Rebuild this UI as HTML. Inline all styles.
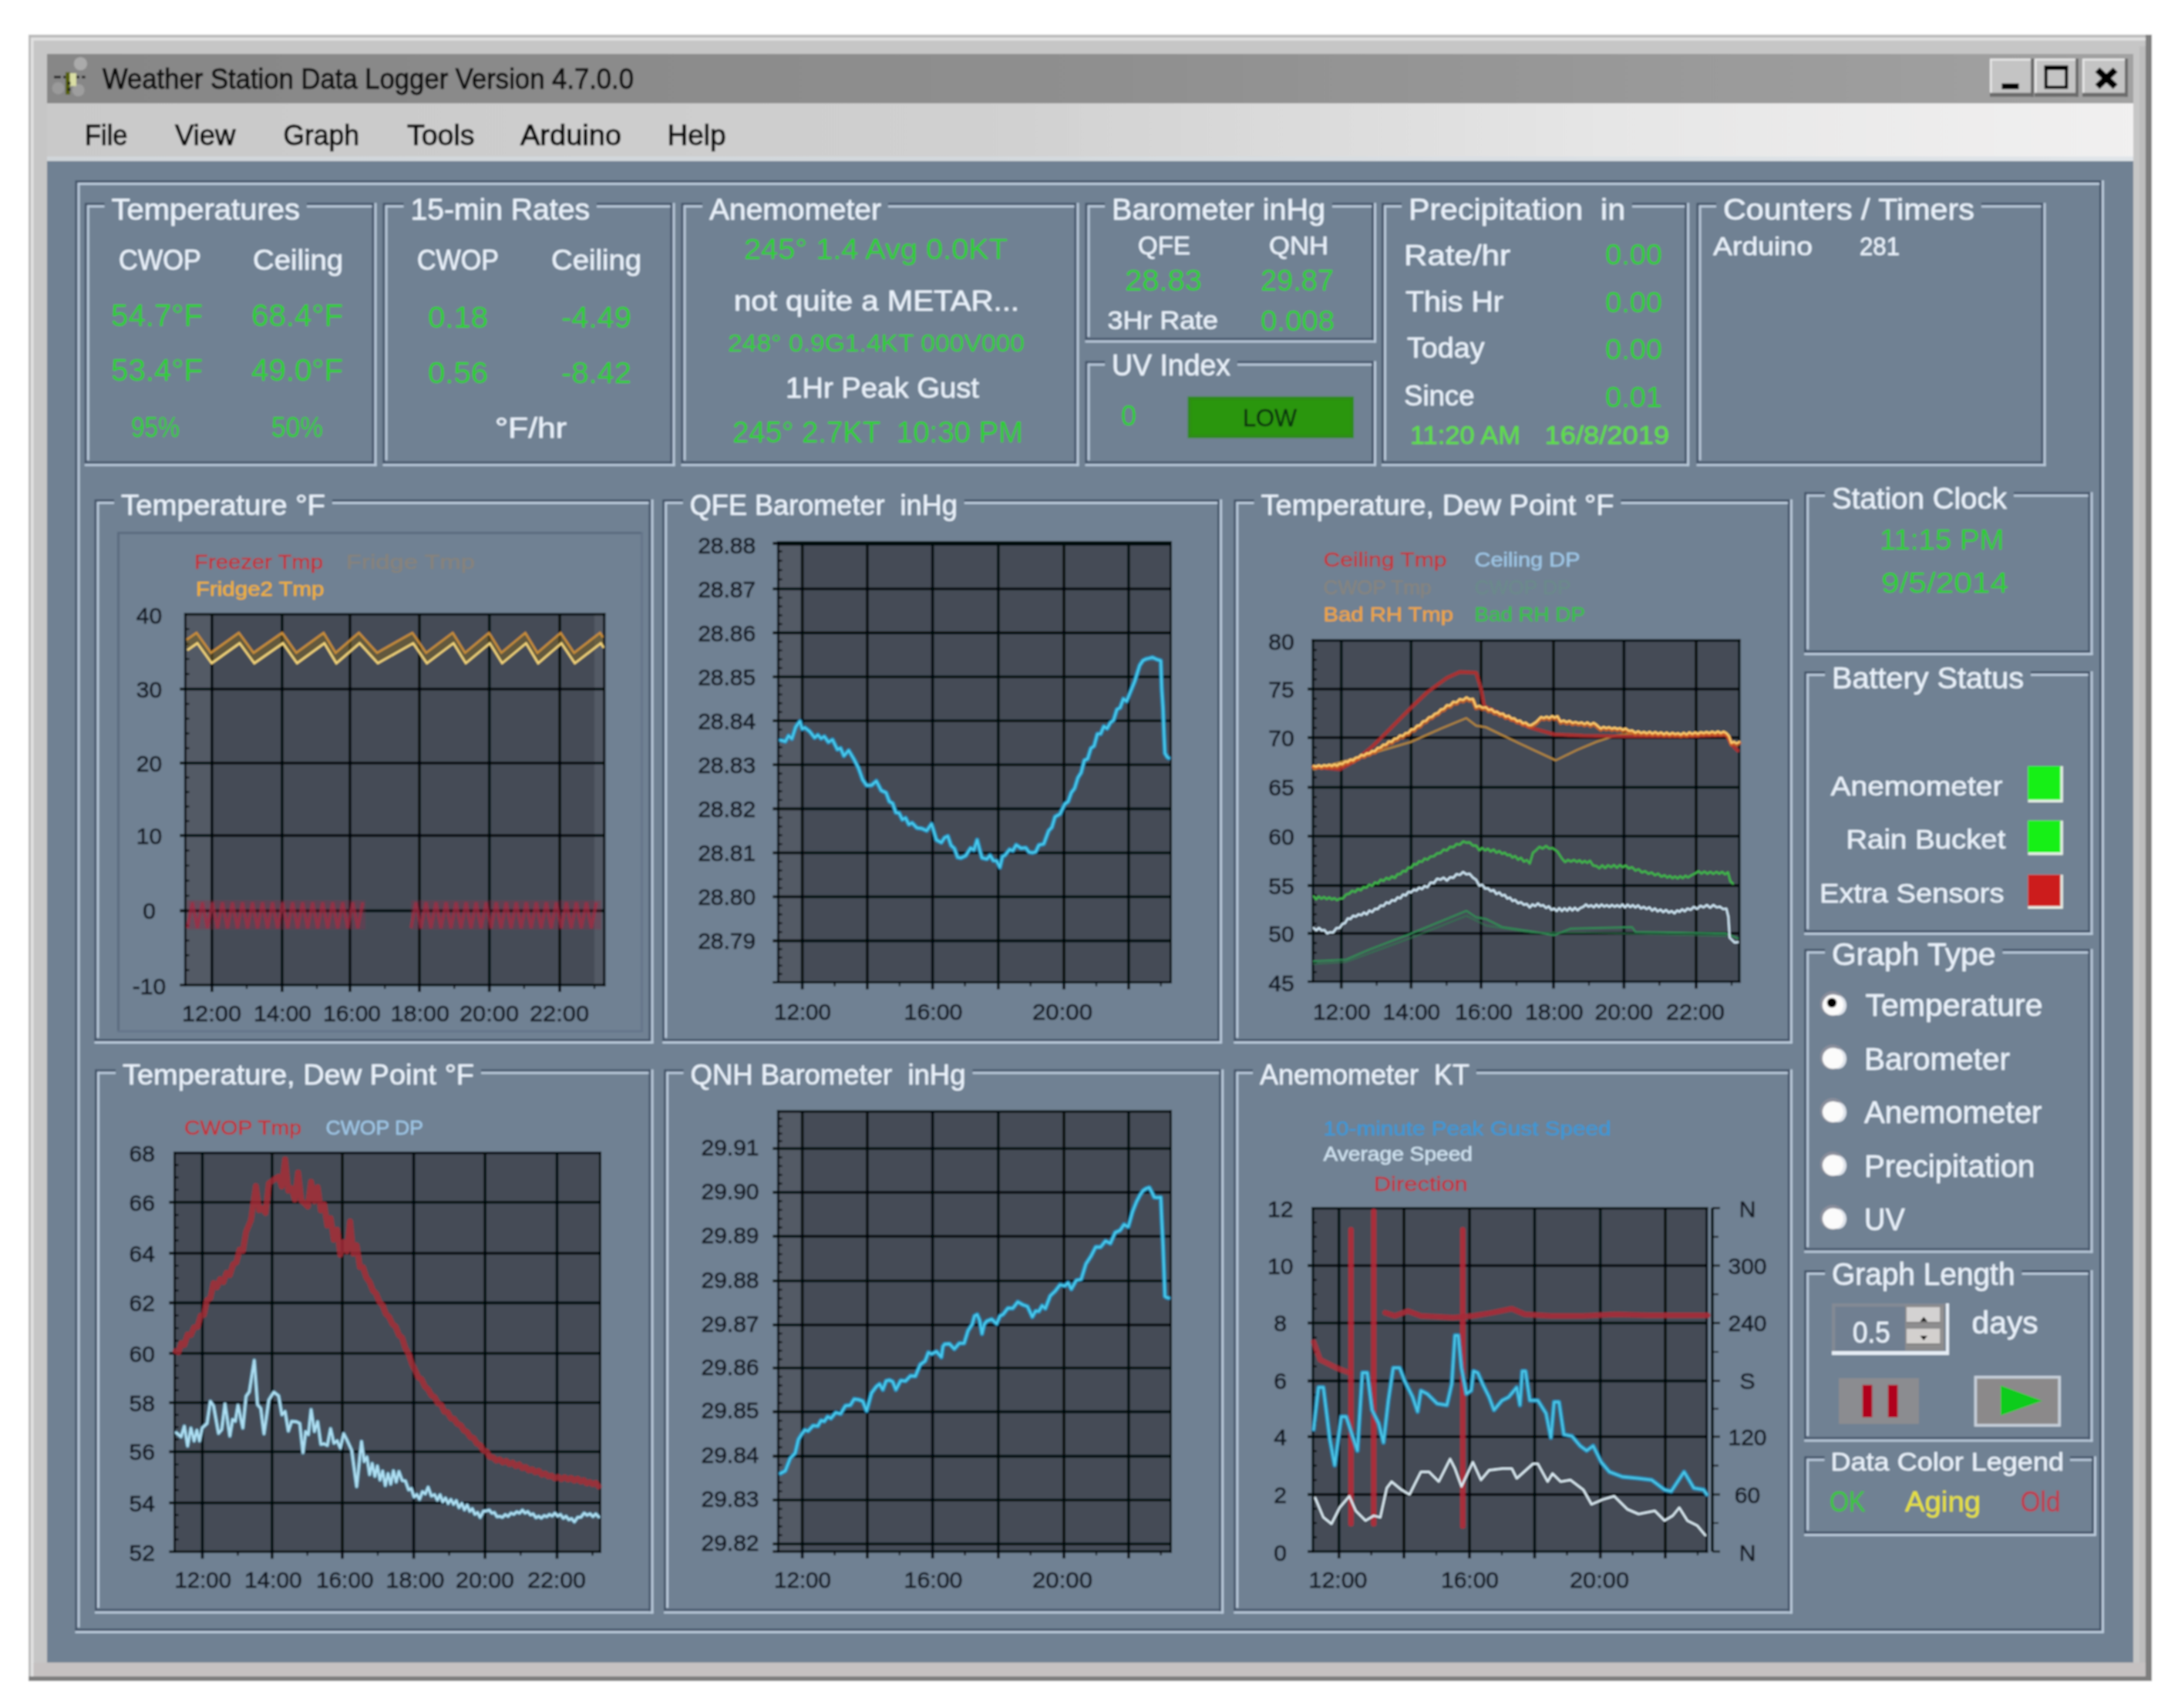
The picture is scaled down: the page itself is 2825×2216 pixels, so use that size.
<!DOCTYPE html>
<html><head><meta charset="utf-8"><title>Weather Station Data Logger Version 4.7.0.0</title>
<style>
html,body{margin:0;padding:0;background:#fff;overflow:hidden;}
svg{display:block;font-family:'Liberation Sans', sans-serif;}
text{white-space:pre;}
</style></head><body>
<svg width="2825" height="2216" viewBox="0 0 2825 2216">
<defs><filter id="soft" x="0" y="0" width="2825" height="2216" filterUnits="userSpaceOnUse"><feGaussianBlur stdDeviation="1.0"/></filter></defs>
<g filter="url(#soft)">
<rect width="2825" height="2216" fill="#ffffff"/>
<rect x="37.0" y="45.0" width="2754.0" height="2136.0" fill="#c6c6c6" />
<rect x="37.0" y="45.0" width="2754.0" height="3.0" fill="#b9b9b9" />
<rect x="37.0" y="45.0" width="3.0" height="2136.0" fill="#b9b9b9" />
<rect x="40.0" y="49.0" width="2744.0" height="3.5" fill="#e2e2e2" />
<rect x="40.0" y="49.0" width="3.5" height="2127.0" fill="#e2e2e2" />
<rect x="2783.0" y="45.0" width="8.0" height="2136.0" fill="#7e7e7e" />
<rect x="37.0" y="2175.0" width="2754.0" height="6.0" fill="#7e7e7e" />
<rect x="2775.0" y="60.0" width="8.0" height="2115.0" fill="#bdbdbd" />
<rect x="43.5" y="2157.0" width="2739.5" height="18.0" fill="#c5c1c1" />
<defs><linearGradient id="gt" x1="0" x2="1" y1="0" y2="0"><stop offset="0" stop-color="#878787"/><stop offset="0.5" stop-color="#8f8f8f"/><stop offset="1" stop-color="#a2a2a2"/></linearGradient><linearGradient id="gm" x1="0" x2="1" y1="0" y2="0"><stop offset="0" stop-color="#c9c9c9"/><stop offset="0.45" stop-color="#d0d0d0"/><stop offset="0.75" stop-color="#e6e6e6"/><stop offset="1" stop-color="#f1f0f0"/></linearGradient></defs>
<rect x="61.0" y="70.0" width="2706.0" height="64.0" fill="url(#gt)" />
<rect x="61.0" y="134.0" width="2706.0" height="75.0" fill="url(#gm)" />
<rect x="61.0" y="203.0" width="2706.0" height="6.0" fill="#d5dde4" opacity="0.6"/>
<rect x="61.0" y="209.0" width="2706.0" height="1948.0" fill="#708193" />
<circle cx="104.4" cy="82.7" r="8.6" fill="#b4b4b4" opacity="0.8"/>
<circle cx="75.5" cy="114.4" r="8" fill="#a2a2a2" opacity="0.7"/>
<circle cx="101.6" cy="117" r="8" fill="#a8a8a8" opacity="0.7"/>
<line x1="70" y1="100" x2="110.6" y2="100" stroke="#1c1c1c" stroke-width="3" stroke-dasharray="9 3"/>
<rect x="85.0" y="93.7" width="5.8" height="28.9" fill="#56600e" />
<rect x="90.6" y="95.0" width="8.3" height="16.6" fill="#dadea4" />
<rect x="87.9" y="106.0" width="3.4" height="4.0" fill="#0a0a0a" />
<rect x="87.9" y="114.4" width="3.4" height="3.4" fill="#0a0a0a" />
<text x="133.0" y="114.5" font-size="37" fill="#111111" textLength="689.0" lengthAdjust="spacingAndGlyphs" text-anchor="start" stroke="#111" stroke-width="1.1">Weather Station Data Logger Version 4.7.0.0</text>
<rect x="2581.0" y="76.0" width="56.0" height="48.0" fill="#c4c4c4" />
<rect x="2581.0" y="76.0" width="56.0" height="2.5" fill="#e8e8e8" />
<rect x="2581.0" y="76.0" width="2.5" height="48.0" fill="#e8e8e8" />
<rect x="2581.0" y="120.5" width="57.0" height="5.0" fill="#6a6a6a" />
<rect x="2634.0" y="76.0" width="4.0" height="49.5" fill="#6a6a6a" />
<rect x="2639.0" y="76.0" width="56.0" height="48.0" fill="#c4c4c4" />
<rect x="2639.0" y="76.0" width="56.0" height="2.5" fill="#e8e8e8" />
<rect x="2639.0" y="76.0" width="2.5" height="48.0" fill="#e8e8e8" />
<rect x="2639.0" y="120.5" width="57.0" height="5.0" fill="#6a6a6a" />
<rect x="2692.0" y="76.0" width="4.0" height="49.5" fill="#6a6a6a" />
<rect x="2701.0" y="76.0" width="58.0" height="48.0" fill="#c4c4c4" />
<rect x="2701.0" y="76.0" width="58.0" height="2.5" fill="#e8e8e8" />
<rect x="2701.0" y="76.0" width="2.5" height="48.0" fill="#e8e8e8" />
<rect x="2701.0" y="120.5" width="59.0" height="5.0" fill="#6a6a6a" />
<rect x="2756.0" y="76.0" width="4.0" height="49.5" fill="#6a6a6a" />
<rect x="2596.5" y="108.3" width="22.0" height="7.4" fill="#000" />
<rect x="2653.7" y="87" width="26.6" height="26.3" fill="none" stroke="#000" stroke-width="4"/>
<rect x="2651.7" y="84.8" width="30.6" height="6.2" fill="#000" />
<path d="M2720.5 90.5 L2743.7 112.5 M2743.7 90.5 L2720.5 112.5" stroke="#000" stroke-width="8.6" fill="none"/>
<text x="110.0" y="188.0" font-size="36" fill="#080808" textLength="55.5" lengthAdjust="spacingAndGlyphs" text-anchor="start" stroke="#080808" stroke-width="1.1">File</text>
<text x="227.0" y="188.0" font-size="36" fill="#080808" textLength="78.5" lengthAdjust="spacingAndGlyphs" text-anchor="start" stroke="#080808" stroke-width="1.1">View</text>
<text x="367.5" y="188.0" font-size="36" fill="#080808" textLength="98.5" lengthAdjust="spacingAndGlyphs" text-anchor="start" stroke="#080808" stroke-width="1.1">Graph</text>
<text x="528.0" y="188.0" font-size="36" fill="#080808" textLength="87.5" lengthAdjust="spacingAndGlyphs" text-anchor="start" stroke="#080808" stroke-width="1.1">Tools</text>
<text x="675.0" y="188.0" font-size="36" fill="#080808" textLength="131.0" lengthAdjust="spacingAndGlyphs" text-anchor="start" stroke="#080808" stroke-width="1.1">Arduino</text>
<text x="865.6" y="188.0" font-size="36" fill="#080808" textLength="76.0" lengthAdjust="spacingAndGlyphs" text-anchor="start" stroke="#080808" stroke-width="1.1">Help</text>
<line x1="99.0" y1="235.5" x2="2724.5" y2="235.5" stroke="#45556a" stroke-width="3.0" />
<line x1="102.0" y1="238.5" x2="2724.5" y2="238.5" stroke="#b9c9da" stroke-width="3.0" />
<line x1="99.0" y1="234.0" x2="99.0" y2="2114.5" stroke="#45556a" stroke-width="3.0" />
<line x1="102.0" y1="237.0" x2="102.0" y2="2111.5" stroke="#b9c9da" stroke-width="3.0" />
<line x1="97.5" y1="2114.5" x2="2724.5" y2="2114.5" stroke="#45556a" stroke-width="3.0" />
<line x1="97.5" y1="2117.5" x2="2729.0" y2="2117.5" stroke="#b9c9da" stroke-width="3.0" />
<line x1="2724.5" y1="234.0" x2="2724.5" y2="2116.0" stroke="#45556a" stroke-width="3.0" />
<line x1="2727.5" y1="234.0" x2="2727.5" y2="2119.0" stroke="#b9c9da" stroke-width="3.0" />
<line x1="111.3" y1="264.7" x2="135.5" y2="264.7" stroke="#45556a" stroke-width="3.0" />
<line x1="114.3" y1="267.7" x2="135.5" y2="267.7" stroke="#b9c9da" stroke-width="3.0" />
<line x1="398.0" y1="264.7" x2="484.0" y2="264.7" stroke="#45556a" stroke-width="3.0" />
<line x1="398.0" y1="267.7" x2="484.0" y2="267.7" stroke="#b9c9da" stroke-width="3.0" />
<line x1="111.3" y1="263.2" x2="111.3" y2="600.2" stroke="#45556a" stroke-width="3.0" />
<line x1="114.3" y1="266.2" x2="114.3" y2="597.2" stroke="#b9c9da" stroke-width="3.0" />
<line x1="109.8" y1="600.2" x2="484.0" y2="600.2" stroke="#45556a" stroke-width="3.0" />
<line x1="109.8" y1="603.2" x2="488.5" y2="603.2" stroke="#b9c9da" stroke-width="3.0" />
<line x1="484.0" y1="263.2" x2="484.0" y2="601.7" stroke="#45556a" stroke-width="3.0" />
<line x1="487.0" y1="263.2" x2="487.0" y2="604.7" stroke="#b9c9da" stroke-width="3.0" />
<text x="144.5" y="285.0" font-size="38" fill="#e9f1fa" stroke="#e9f1fa" stroke-width="0.45" textLength="244.5" lengthAdjust="spacingAndGlyphs" text-anchor="start" >Temperatures</text>
<line x1="498.0" y1="264.7" x2="523.5" y2="264.7" stroke="#45556a" stroke-width="3.0" />
<line x1="501.0" y1="267.7" x2="523.5" y2="267.7" stroke="#b9c9da" stroke-width="3.0" />
<line x1="774.0" y1="264.7" x2="871.0" y2="264.7" stroke="#45556a" stroke-width="3.0" />
<line x1="774.0" y1="267.7" x2="871.0" y2="267.7" stroke="#b9c9da" stroke-width="3.0" />
<line x1="498.0" y1="263.2" x2="498.0" y2="600.2" stroke="#45556a" stroke-width="3.0" />
<line x1="501.0" y1="266.2" x2="501.0" y2="597.2" stroke="#b9c9da" stroke-width="3.0" />
<line x1="496.5" y1="600.2" x2="871.0" y2="600.2" stroke="#45556a" stroke-width="3.0" />
<line x1="496.5" y1="603.2" x2="875.5" y2="603.2" stroke="#b9c9da" stroke-width="3.0" />
<line x1="871.0" y1="263.2" x2="871.0" y2="601.7" stroke="#45556a" stroke-width="3.0" />
<line x1="874.0" y1="263.2" x2="874.0" y2="604.7" stroke="#b9c9da" stroke-width="3.0" />
<text x="532.5" y="285.0" font-size="38" fill="#e9f1fa" stroke="#e9f1fa" stroke-width="0.45" textLength="232.5" lengthAdjust="spacingAndGlyphs" text-anchor="start" >15-min Rates</text>
<line x1="885.0" y1="264.7" x2="911.0" y2="264.7" stroke="#45556a" stroke-width="3.0" />
<line x1="888.0" y1="267.7" x2="911.0" y2="267.7" stroke="#b9c9da" stroke-width="3.0" />
<line x1="1152.0" y1="264.7" x2="1395.0" y2="264.7" stroke="#45556a" stroke-width="3.0" />
<line x1="1152.0" y1="267.7" x2="1395.0" y2="267.7" stroke="#b9c9da" stroke-width="3.0" />
<line x1="885.0" y1="263.2" x2="885.0" y2="600.2" stroke="#45556a" stroke-width="3.0" />
<line x1="888.0" y1="266.2" x2="888.0" y2="597.2" stroke="#b9c9da" stroke-width="3.0" />
<line x1="883.5" y1="600.2" x2="1395.0" y2="600.2" stroke="#45556a" stroke-width="3.0" />
<line x1="883.5" y1="603.2" x2="1399.5" y2="603.2" stroke="#b9c9da" stroke-width="3.0" />
<line x1="1395.0" y1="263.2" x2="1395.0" y2="601.7" stroke="#45556a" stroke-width="3.0" />
<line x1="1398.0" y1="263.2" x2="1398.0" y2="604.7" stroke="#b9c9da" stroke-width="3.0" />
<text x="920.0" y="285.0" font-size="38" fill="#e9f1fa" stroke="#e9f1fa" stroke-width="0.45" textLength="223.0" lengthAdjust="spacingAndGlyphs" text-anchor="start" >Anemometer</text>
<line x1="1409.0" y1="264.7" x2="1433.0" y2="264.7" stroke="#45556a" stroke-width="3.0" />
<line x1="1412.0" y1="267.7" x2="1433.0" y2="267.7" stroke="#b9c9da" stroke-width="3.0" />
<line x1="1728.0" y1="264.7" x2="1780.5" y2="264.7" stroke="#45556a" stroke-width="3.0" />
<line x1="1728.0" y1="267.7" x2="1780.5" y2="267.7" stroke="#b9c9da" stroke-width="3.0" />
<line x1="1409.0" y1="263.2" x2="1409.0" y2="440.0" stroke="#45556a" stroke-width="3.0" />
<line x1="1412.0" y1="266.2" x2="1412.0" y2="437.0" stroke="#b9c9da" stroke-width="3.0" />
<line x1="1407.5" y1="440.0" x2="1780.5" y2="440.0" stroke="#45556a" stroke-width="3.0" />
<line x1="1407.5" y1="443.0" x2="1785.0" y2="443.0" stroke="#b9c9da" stroke-width="3.0" />
<line x1="1780.5" y1="263.2" x2="1780.5" y2="441.5" stroke="#45556a" stroke-width="3.0" />
<line x1="1783.5" y1="263.2" x2="1783.5" y2="444.5" stroke="#b9c9da" stroke-width="3.0" />
<text x="1442.0" y="285.0" font-size="38" fill="#e9f1fa" stroke="#e9f1fa" stroke-width="0.45" textLength="277.0" lengthAdjust="spacingAndGlyphs" text-anchor="start" >Barometer inHg</text>
<line x1="1409.0" y1="470.0" x2="1433.0" y2="470.0" stroke="#45556a" stroke-width="3.0" />
<line x1="1412.0" y1="473.0" x2="1433.0" y2="473.0" stroke="#b9c9da" stroke-width="3.0" />
<line x1="1605.0" y1="470.0" x2="1780.5" y2="470.0" stroke="#45556a" stroke-width="3.0" />
<line x1="1605.0" y1="473.0" x2="1780.5" y2="473.0" stroke="#b9c9da" stroke-width="3.0" />
<line x1="1409.0" y1="468.5" x2="1409.0" y2="600.2" stroke="#45556a" stroke-width="3.0" />
<line x1="1412.0" y1="471.5" x2="1412.0" y2="597.2" stroke="#b9c9da" stroke-width="3.0" />
<line x1="1407.5" y1="600.2" x2="1780.5" y2="600.2" stroke="#45556a" stroke-width="3.0" />
<line x1="1407.5" y1="603.2" x2="1785.0" y2="603.2" stroke="#b9c9da" stroke-width="3.0" />
<line x1="1780.5" y1="468.5" x2="1780.5" y2="601.7" stroke="#45556a" stroke-width="3.0" />
<line x1="1783.5" y1="468.5" x2="1783.5" y2="604.7" stroke="#b9c9da" stroke-width="3.0" />
<text x="1442.0" y="487.0" font-size="38" fill="#e9f1fa" stroke="#e9f1fa" stroke-width="0.45" textLength="154.0" lengthAdjust="spacingAndGlyphs" text-anchor="start" >UV Index</text>
<line x1="1793.5" y1="264.7" x2="1818.0" y2="264.7" stroke="#45556a" stroke-width="3.0" />
<line x1="1796.5" y1="267.7" x2="1818.0" y2="267.7" stroke="#b9c9da" stroke-width="3.0" />
<line x1="2117.0" y1="264.7" x2="2186.6" y2="264.7" stroke="#45556a" stroke-width="3.0" />
<line x1="2117.0" y1="267.7" x2="2186.6" y2="267.7" stroke="#b9c9da" stroke-width="3.0" />
<line x1="1793.5" y1="263.2" x2="1793.5" y2="600.2" stroke="#45556a" stroke-width="3.0" />
<line x1="1796.5" y1="266.2" x2="1796.5" y2="597.2" stroke="#b9c9da" stroke-width="3.0" />
<line x1="1792.0" y1="600.2" x2="2186.6" y2="600.2" stroke="#45556a" stroke-width="3.0" />
<line x1="1792.0" y1="603.2" x2="2191.1" y2="603.2" stroke="#b9c9da" stroke-width="3.0" />
<line x1="2186.6" y1="263.2" x2="2186.6" y2="601.7" stroke="#45556a" stroke-width="3.0" />
<line x1="2189.6" y1="263.2" x2="2189.6" y2="604.7" stroke="#b9c9da" stroke-width="3.0" />
<text x="1827.0" y="285.0" font-size="38" fill="#e9f1fa" stroke="#e9f1fa" stroke-width="0.45" textLength="281.0" lengthAdjust="spacingAndGlyphs" text-anchor="start" >Precipitation  in</text>
<line x1="2202.0" y1="264.7" x2="2226.0" y2="264.7" stroke="#45556a" stroke-width="3.0" />
<line x1="2205.0" y1="267.7" x2="2226.0" y2="267.7" stroke="#b9c9da" stroke-width="3.0" />
<line x1="2570.0" y1="264.7" x2="2649.0" y2="264.7" stroke="#45556a" stroke-width="3.0" />
<line x1="2570.0" y1="267.7" x2="2649.0" y2="267.7" stroke="#b9c9da" stroke-width="3.0" />
<line x1="2202.0" y1="263.2" x2="2202.0" y2="600.2" stroke="#45556a" stroke-width="3.0" />
<line x1="2205.0" y1="266.2" x2="2205.0" y2="597.2" stroke="#b9c9da" stroke-width="3.0" />
<line x1="2200.5" y1="600.2" x2="2649.0" y2="600.2" stroke="#45556a" stroke-width="3.0" />
<line x1="2200.5" y1="603.2" x2="2653.5" y2="603.2" stroke="#b9c9da" stroke-width="3.0" />
<line x1="2649.0" y1="263.2" x2="2649.0" y2="601.7" stroke="#45556a" stroke-width="3.0" />
<line x1="2652.0" y1="263.2" x2="2652.0" y2="604.7" stroke="#b9c9da" stroke-width="3.0" />
<text x="2235.0" y="285.0" font-size="38" fill="#e9f1fa" stroke="#e9f1fa" stroke-width="0.45" textLength="326.0" lengthAdjust="spacingAndGlyphs" text-anchor="start" >Counters / Timers</text>
<text x="154.0" y="350.0" font-size="37" fill="#e9f1fa" stroke="#e9f1fa" stroke-width="0.45" textLength="107.0" lengthAdjust="spacingAndGlyphs" text-anchor="start" >CWOP</text>
<text x="328.0" y="350.0" font-size="37" fill="#e9f1fa" stroke="#e9f1fa" stroke-width="0.45" textLength="117.0" lengthAdjust="spacingAndGlyphs" text-anchor="start" >Ceiling</text>
<text x="144.0" y="422.5" font-size="40" fill="#2bd02f" textLength="119.0" lengthAdjust="spacingAndGlyphs" text-anchor="start" >54.7°F</text>
<text x="326.0" y="422.5" font-size="40" fill="#2bd02f" textLength="119.0" lengthAdjust="spacingAndGlyphs" text-anchor="start" >68.4°F</text>
<text x="144.0" y="494.0" font-size="40" fill="#2bd02f" textLength="119.0" lengthAdjust="spacingAndGlyphs" text-anchor="start" >53.4°F</text>
<text x="326.0" y="494.0" font-size="40" fill="#2bd02f" textLength="119.0" lengthAdjust="spacingAndGlyphs" text-anchor="start" >49.0°F</text>
<text x="170.0" y="566.5" font-size="36" fill="#2bd02f" textLength="63.0" lengthAdjust="spacingAndGlyphs" text-anchor="start" >95%</text>
<text x="352.0" y="566.5" font-size="36" fill="#2bd02f" textLength="67.0" lengthAdjust="spacingAndGlyphs" text-anchor="start" >50%</text>
<text x="541.0" y="350.0" font-size="37" fill="#e9f1fa" stroke="#e9f1fa" stroke-width="0.45" textLength="106.0" lengthAdjust="spacingAndGlyphs" text-anchor="start" >CWOP</text>
<text x="715.0" y="350.0" font-size="37" fill="#e9f1fa" stroke="#e9f1fa" stroke-width="0.45" textLength="117.0" lengthAdjust="spacingAndGlyphs" text-anchor="start" >Ceiling</text>
<text x="555.0" y="425.0" font-size="38" fill="#2bd02f" textLength="78.0" lengthAdjust="spacingAndGlyphs" text-anchor="start" >0.18</text>
<text x="728.0" y="425.0" font-size="38" fill="#2bd02f" textLength="91.0" lengthAdjust="spacingAndGlyphs" text-anchor="start" >-4.49</text>
<text x="555.0" y="497.0" font-size="38" fill="#2bd02f" textLength="78.0" lengthAdjust="spacingAndGlyphs" text-anchor="start" >0.56</text>
<text x="728.0" y="497.0" font-size="38" fill="#2bd02f" textLength="91.0" lengthAdjust="spacingAndGlyphs" text-anchor="start" >-8.42</text>
<text x="642.0" y="568.0" font-size="36" fill="#e9f1fa" stroke="#e9f1fa" stroke-width="0.45" textLength="93.0" lengthAdjust="spacingAndGlyphs" text-anchor="start" >°F/hr</text>
<text x="965.0" y="336.0" font-size="36" fill="#2bd02f" textLength="342.0" lengthAdjust="spacingAndGlyphs" text-anchor="start" >245° 1.4 Avg 0.0KT</text>
<text x="952.0" y="403.0" font-size="36" fill="#e9f1fa" stroke="#e9f1fa" stroke-width="0.45" textLength="370.0" lengthAdjust="spacingAndGlyphs" text-anchor="start" >not quite a METAR...</text>
<text x="944.0" y="456.0" font-size="32" fill="#2bd02f" textLength="385.0" lengthAdjust="spacingAndGlyphs" text-anchor="start" >248° 0.9G1.4KT 000V000</text>
<text x="1019.0" y="516.0" font-size="36" fill="#e9f1fa" stroke="#e9f1fa" stroke-width="0.45" textLength="251.0" lengthAdjust="spacingAndGlyphs" text-anchor="start" >1Hr Peak Gust</text>
<text x="950.0" y="574.0" font-size="38" fill="#2bd02f" textLength="377.0" lengthAdjust="spacingAndGlyphs" text-anchor="start" >245° 2.7KT  10:30 PM</text>
<text x="1476.0" y="330.0" font-size="34" fill="#e9f1fa" stroke="#e9f1fa" stroke-width="0.45" textLength="68.0" lengthAdjust="spacingAndGlyphs" text-anchor="start" >QFE</text>
<text x="1646.0" y="330.0" font-size="34" fill="#e9f1fa" stroke="#e9f1fa" stroke-width="0.45" textLength="77.0" lengthAdjust="spacingAndGlyphs" text-anchor="start" >QNH</text>
<text x="1459.0" y="377.0" font-size="38" fill="#2bd02f" textLength="100.0" lengthAdjust="spacingAndGlyphs" text-anchor="start" >28.83</text>
<text x="1635.0" y="377.0" font-size="38" fill="#2bd02f" textLength="95.0" lengthAdjust="spacingAndGlyphs" text-anchor="start" >29.87</text>
<text x="1436.5" y="427.0" font-size="34" fill="#e9f1fa" stroke="#e9f1fa" stroke-width="0.45" textLength="143.5" lengthAdjust="spacingAndGlyphs" text-anchor="start" >3Hr Rate</text>
<text x="1635.0" y="429.0" font-size="37" fill="#2bd02f" textLength="96.0" lengthAdjust="spacingAndGlyphs" text-anchor="start" >0.008</text>
<text x="1454.0" y="552.0" font-size="36" fill="#2bd02f" textLength="20.0" lengthAdjust="spacingAndGlyphs" text-anchor="start" >0</text>
<rect x="1540.6" y="514.5" width="215.4" height="53.9" fill="#2f8c16" />
<rect x="1545.0" y="519.0" width="207.0" height="45.0" fill="#2b960f" />
<text x="1612.0" y="553.0" font-size="31" fill="#0c3308" stroke="#0c3308" stroke-width="0.45" textLength="70.0" lengthAdjust="spacingAndGlyphs" text-anchor="start" >LOW</text>
<text x="1821.0" y="343.5" font-size="36" fill="#e9f1fa" stroke="#e9f1fa" stroke-width="0.45" textLength="138.0" lengthAdjust="spacingAndGlyphs" text-anchor="start" >Rate/hr</text>
<text x="1823.0" y="404.0" font-size="36" fill="#e9f1fa" stroke="#e9f1fa" stroke-width="0.45" textLength="127.0" lengthAdjust="spacingAndGlyphs" text-anchor="start" >This Hr</text>
<text x="1825.0" y="464.0" font-size="36" fill="#e9f1fa" stroke="#e9f1fa" stroke-width="0.45" textLength="100.5" lengthAdjust="spacingAndGlyphs" text-anchor="start" >Today</text>
<text x="1821.0" y="525.6" font-size="36" fill="#e9f1fa" stroke="#e9f1fa" stroke-width="0.45" textLength="91.5" lengthAdjust="spacingAndGlyphs" text-anchor="start" >Since</text>
<text x="2082.0" y="343.0" font-size="37" fill="#2bd02f" textLength="74.0" lengthAdjust="spacingAndGlyphs" text-anchor="start" >0.00</text>
<text x="2082.0" y="405.0" font-size="37" fill="#2bd02f" textLength="74.0" lengthAdjust="spacingAndGlyphs" text-anchor="start" >0.00</text>
<text x="2082.0" y="466.0" font-size="37" fill="#2bd02f" textLength="74.0" lengthAdjust="spacingAndGlyphs" text-anchor="start" >0.00</text>
<text x="2082.0" y="527.5" font-size="37" fill="#2bd02f" textLength="74.0" lengthAdjust="spacingAndGlyphs" text-anchor="start" >0.01</text>
<text x="1829.0" y="576.0" font-size="34" fill="#5fe046" stroke="#5fe046" stroke-width="0.45" textLength="143.0" lengthAdjust="spacingAndGlyphs" text-anchor="start" >11:20 AM</text>
<text x="2003.6" y="576.0" font-size="34" fill="#5fe046" stroke="#5fe046" stroke-width="0.45" textLength="161.5" lengthAdjust="spacingAndGlyphs" text-anchor="start" >16/8/2019</text>
<text x="2222.0" y="331.0" font-size="34" fill="#e9f1fa" stroke="#e9f1fa" stroke-width="0.45" textLength="129.0" lengthAdjust="spacingAndGlyphs" text-anchor="start" >Arduino</text>
<text x="2412.0" y="331.0" font-size="34" fill="#e9f1fa" stroke="#e9f1fa" stroke-width="0.45" textLength="52.0" lengthAdjust="spacingAndGlyphs" text-anchor="start" >281</text>
<line x1="2341.7" y1="640.0" x2="2367.0" y2="640.0" stroke="#45556a" stroke-width="3.0" />
<line x1="2344.7" y1="643.0" x2="2367.0" y2="643.0" stroke="#b9c9da" stroke-width="3.0" />
<line x1="2612.0" y1="640.0" x2="2710.0" y2="640.0" stroke="#45556a" stroke-width="3.0" />
<line x1="2612.0" y1="643.0" x2="2710.0" y2="643.0" stroke="#b9c9da" stroke-width="3.0" />
<line x1="2341.7" y1="638.5" x2="2341.7" y2="845.5" stroke="#45556a" stroke-width="3.0" />
<line x1="2344.7" y1="641.5" x2="2344.7" y2="842.5" stroke="#b9c9da" stroke-width="3.0" />
<line x1="2340.2" y1="845.5" x2="2710.0" y2="845.5" stroke="#45556a" stroke-width="3.0" />
<line x1="2340.2" y1="848.5" x2="2714.5" y2="848.5" stroke="#b9c9da" stroke-width="3.0" />
<line x1="2710.0" y1="638.5" x2="2710.0" y2="847.0" stroke="#45556a" stroke-width="3.0" />
<line x1="2713.0" y1="638.5" x2="2713.0" y2="850.0" stroke="#b9c9da" stroke-width="3.0" />
<text x="2376.0" y="659.5" font-size="38" fill="#e9f1fa" stroke="#e9f1fa" stroke-width="0.45" textLength="227.0" lengthAdjust="spacingAndGlyphs" text-anchor="start" >Station Clock</text>
<text x="2438.0" y="712.6" font-size="36" fill="#2bd02f" textLength="161.5" lengthAdjust="spacingAndGlyphs" text-anchor="start" >11:15 PM</text>
<text x="2440.0" y="769.0" font-size="37" fill="#2bd02f" textLength="165.0" lengthAdjust="spacingAndGlyphs" text-anchor="start" >9/5/2014</text>
<line x1="2341.7" y1="872.6" x2="2367.0" y2="872.6" stroke="#45556a" stroke-width="3.0" />
<line x1="2344.7" y1="875.6" x2="2367.0" y2="875.6" stroke="#b9c9da" stroke-width="3.0" />
<line x1="2634.0" y1="872.6" x2="2710.0" y2="872.6" stroke="#45556a" stroke-width="3.0" />
<line x1="2634.0" y1="875.6" x2="2710.0" y2="875.6" stroke="#b9c9da" stroke-width="3.0" />
<line x1="2341.7" y1="871.1" x2="2341.7" y2="1208.4" stroke="#45556a" stroke-width="3.0" />
<line x1="2344.7" y1="874.1" x2="2344.7" y2="1205.4" stroke="#b9c9da" stroke-width="3.0" />
<line x1="2340.2" y1="1208.4" x2="2710.0" y2="1208.4" stroke="#45556a" stroke-width="3.0" />
<line x1="2340.2" y1="1211.4" x2="2714.5" y2="1211.4" stroke="#b9c9da" stroke-width="3.0" />
<line x1="2710.0" y1="871.1" x2="2710.0" y2="1209.9" stroke="#45556a" stroke-width="3.0" />
<line x1="2713.0" y1="871.1" x2="2713.0" y2="1212.9" stroke="#b9c9da" stroke-width="3.0" />
<text x="2376.0" y="892.5" font-size="38" fill="#e9f1fa" stroke="#e9f1fa" stroke-width="0.45" textLength="249.0" lengthAdjust="spacingAndGlyphs" text-anchor="start" >Battery Status</text>
<text x="2374.5" y="1032.0" font-size="35" fill="#e9f1fa" stroke="#e9f1fa" stroke-width="0.45" textLength="223.0" lengthAdjust="spacingAndGlyphs" text-anchor="start" >Anemometer</text>
<text x="2394.4" y="1101.0" font-size="35" fill="#e9f1fa" stroke="#e9f1fa" stroke-width="0.45" textLength="207.0" lengthAdjust="spacingAndGlyphs" text-anchor="start" >Rain Bucket</text>
<text x="2360.0" y="1171.0" font-size="35" fill="#e9f1fa" stroke="#e9f1fa" stroke-width="0.45" textLength="239.5" lengthAdjust="spacingAndGlyphs" text-anchor="start" >Extra Sensors</text>
<rect x="2630.4" y="994.0" width="45.4" height="47.0" fill="#e6efe6" />
<rect x="2630.4" y="994.0" width="42.1" height="43.5" fill="#12f012" />
<rect x="2630.4" y="1064.7" width="45.4" height="44.7" fill="#e6efe6" />
<rect x="2630.4" y="1064.7" width="42.1" height="41.2" fill="#12f012" />
<rect x="2630.4" y="1134.8" width="45.4" height="44.2" fill="#e6efe6" />
<rect x="2630.4" y="1134.8" width="42.1" height="40.7" fill="#cc1a1a" />
<line x1="2341.7" y1="1232.7" x2="2367.0" y2="1232.7" stroke="#45556a" stroke-width="3.0" />
<line x1="2344.7" y1="1235.7" x2="2367.0" y2="1235.7" stroke="#b9c9da" stroke-width="3.0" />
<line x1="2597.5" y1="1232.7" x2="2710.0" y2="1232.7" stroke="#45556a" stroke-width="3.0" />
<line x1="2597.5" y1="1235.7" x2="2710.0" y2="1235.7" stroke="#b9c9da" stroke-width="3.0" />
<line x1="2341.7" y1="1231.2" x2="2341.7" y2="1621.0" stroke="#45556a" stroke-width="3.0" />
<line x1="2344.7" y1="1234.2" x2="2344.7" y2="1618.0" stroke="#b9c9da" stroke-width="3.0" />
<line x1="2340.2" y1="1621.0" x2="2710.0" y2="1621.0" stroke="#45556a" stroke-width="3.0" />
<line x1="2340.2" y1="1624.0" x2="2714.5" y2="1624.0" stroke="#b9c9da" stroke-width="3.0" />
<line x1="2710.0" y1="1231.2" x2="2710.0" y2="1622.5" stroke="#45556a" stroke-width="3.0" />
<line x1="2713.0" y1="1231.2" x2="2713.0" y2="1625.5" stroke="#b9c9da" stroke-width="3.0" />
<text x="2376.0" y="1251.5" font-size="40" fill="#e9f1fa" stroke="#e9f1fa" stroke-width="0.45" textLength="212.5" lengthAdjust="spacingAndGlyphs" text-anchor="start" >Graph Type</text>
<text x="2419.5" y="1318.0" font-size="40" fill="#e9f1fa" stroke="#e9f1fa" stroke-width="0.45" textLength="230.0" lengthAdjust="spacingAndGlyphs" text-anchor="start" >Temperature</text>
<circle cx="2377" cy="1302.3000000000002" r="16.3" fill="#8a8e9b"/>
<ellipse cx="2384" cy="1304.4" rx="11" ry="13" fill="#dde2ea"/>
<circle cx="2377.5" cy="1303.9" r="13.6" fill="#fbfbfb"/>
<text x="2418.0" y="1388.0" font-size="40" fill="#e9f1fa" stroke="#e9f1fa" stroke-width="0.45" textLength="189.0" lengthAdjust="spacingAndGlyphs" text-anchor="start" >Barometer</text>
<circle cx="2377" cy="1371.6000000000001" r="16.3" fill="#8a8e9b"/>
<ellipse cx="2384" cy="1373.7" rx="11" ry="13" fill="#dde2ea"/>
<circle cx="2377.5" cy="1373.2" r="13.6" fill="#fbfbfb"/>
<text x="2418.0" y="1457.0" font-size="40" fill="#e9f1fa" stroke="#e9f1fa" stroke-width="0.45" textLength="230.5" lengthAdjust="spacingAndGlyphs" text-anchor="start" >Anemometer</text>
<circle cx="2377" cy="1440.9" r="16.3" fill="#8a8e9b"/>
<ellipse cx="2384" cy="1443.0" rx="11" ry="13" fill="#dde2ea"/>
<circle cx="2377.5" cy="1442.5" r="13.6" fill="#fbfbfb"/>
<text x="2418.0" y="1527.0" font-size="40" fill="#e9f1fa" stroke="#e9f1fa" stroke-width="0.45" textLength="221.5" lengthAdjust="spacingAndGlyphs" text-anchor="start" >Precipitation</text>
<circle cx="2377" cy="1510.2" r="16.3" fill="#8a8e9b"/>
<ellipse cx="2384" cy="1512.3" rx="11" ry="13" fill="#dde2ea"/>
<circle cx="2377.5" cy="1511.8" r="13.6" fill="#fbfbfb"/>
<text x="2418.0" y="1595.5" font-size="40" fill="#e9f1fa" stroke="#e9f1fa" stroke-width="0.45" textLength="52.7" lengthAdjust="spacingAndGlyphs" text-anchor="start" >UV</text>
<circle cx="2377" cy="1579.5" r="16.3" fill="#8a8e9b"/>
<ellipse cx="2384" cy="1581.6" rx="11" ry="13" fill="#dde2ea"/>
<circle cx="2377.5" cy="1581.1" r="13.6" fill="#fbfbfb"/>
<circle cx="2376" cy="1301" r="6.2" fill="#000"/>
<line x1="2341.7" y1="1649.5" x2="2367.0" y2="1649.5" stroke="#45556a" stroke-width="3.0" />
<line x1="2344.7" y1="1652.5" x2="2367.0" y2="1652.5" stroke="#b9c9da" stroke-width="3.0" />
<line x1="2622.5" y1="1649.5" x2="2710.0" y2="1649.5" stroke="#45556a" stroke-width="3.0" />
<line x1="2622.5" y1="1652.5" x2="2710.0" y2="1652.5" stroke="#b9c9da" stroke-width="3.0" />
<line x1="2341.7" y1="1648.0" x2="2341.7" y2="1866.0" stroke="#45556a" stroke-width="3.0" />
<line x1="2344.7" y1="1651.0" x2="2344.7" y2="1863.0" stroke="#b9c9da" stroke-width="3.0" />
<line x1="2340.2" y1="1866.0" x2="2710.0" y2="1866.0" stroke="#45556a" stroke-width="3.0" />
<line x1="2340.2" y1="1869.0" x2="2714.5" y2="1869.0" stroke="#b9c9da" stroke-width="3.0" />
<line x1="2710.0" y1="1648.0" x2="2710.0" y2="1867.5" stroke="#45556a" stroke-width="3.0" />
<line x1="2713.0" y1="1648.0" x2="2713.0" y2="1870.5" stroke="#b9c9da" stroke-width="3.0" />
<text x="2376.0" y="1667.0" font-size="40" fill="#e9f1fa" stroke="#e9f1fa" stroke-width="0.45" textLength="237.5" lengthAdjust="spacingAndGlyphs" text-anchor="start" >Graph Length</text>
<rect x="2376.0" y="1691.0" width="152.0" height="67.0" fill="#e6edf5" />
<rect x="2376.0" y="1691.0" width="148.0" height="62.0" fill="#838a94" />
<rect x="2380.5" y="1695.4" width="143.5" height="57.6" fill="#6f7f91" />
<rect x="2471.0" y="1693.0" width="51.0" height="59.5" fill="#8c8c8e" />
<text x="2403.0" y="1741.5" font-size="39" fill="#e9f1fa" stroke="#e9f1fa" stroke-width="0.45" textLength="48.8" lengthAdjust="spacingAndGlyphs" text-anchor="start" >0.5</text>
<rect x="2473.0" y="1696.0" width="45.7" height="21.5" fill="#d3d2d2" />
<rect x="2473.0" y="1724.0" width="45.7" height="21.4" fill="#d3d0ce" />
<rect x="2473.0" y="1715.0" width="45.7" height="2.5" fill="#7a7a7a" />
<rect x="2473.0" y="1743.0" width="45.7" height="2.4" fill="#7a7a7a" />
<rect x="2516.2" y="1696.0" width="2.5" height="21.5" fill="#8a8a8a" />
<rect x="2516.2" y="1724.0" width="2.5" height="21.4" fill="#8a8a8a" />
<path d="M2490.5 1714.5 L2500 1714.5 L2495.2 1708.5 Z M2490.5 1733 L2500 1733 L2495.2 1739 Z" fill="#000"/>
<text x="2557.6" y="1730.0" font-size="40" fill="#e9f1fa" stroke="#e9f1fa" stroke-width="0.45" textLength="86.0" lengthAdjust="spacingAndGlyphs" text-anchor="start" >days</text>
<rect x="2385.0" y="1788.0" width="104.0" height="59.5" fill="#8b8c90" />
<rect x="2415.8" y="1796.8" width="12.5" height="41.9" fill="#b0021f" />
<rect x="2448.9" y="1796.8" width="12.5" height="41.9" fill="#b0021f" />
<rect x="2560.6" y="1785.0" width="112.4" height="66.0" fill="#c6cfda" />
<rect x="2564.2" y="1788.6" width="105.2" height="58.8" fill="#8b898a" />
<path d="M2595 1797.5 L2649 1817.4 L2595 1836.5 Z" fill="#08cc1c"/>
<line x1="2341.7" y1="1891.0" x2="2366.5" y2="1891.0" stroke="#45556a" stroke-width="3.0" />
<line x1="2344.7" y1="1894.0" x2="2366.5" y2="1894.0" stroke="#b9c9da" stroke-width="3.0" />
<line x1="2685.0" y1="1891.0" x2="2714.5" y2="1891.0" stroke="#45556a" stroke-width="3.0" />
<line x1="2685.0" y1="1894.0" x2="2714.5" y2="1894.0" stroke="#b9c9da" stroke-width="3.0" />
<line x1="2341.7" y1="1889.5" x2="2341.7" y2="1988.5" stroke="#45556a" stroke-width="3.0" />
<line x1="2344.7" y1="1892.5" x2="2344.7" y2="1985.5" stroke="#b9c9da" stroke-width="3.0" />
<line x1="2340.2" y1="1988.5" x2="2714.5" y2="1988.5" stroke="#45556a" stroke-width="3.0" />
<line x1="2340.2" y1="1991.5" x2="2719.0" y2="1991.5" stroke="#b9c9da" stroke-width="3.0" />
<line x1="2714.5" y1="1889.5" x2="2714.5" y2="1990.0" stroke="#45556a" stroke-width="3.0" />
<line x1="2717.5" y1="1889.5" x2="2717.5" y2="1993.0" stroke="#b9c9da" stroke-width="3.0" />
<text x="2374.5" y="1907.5" font-size="34" fill="#e9f1fa" stroke="#e9f1fa" stroke-width="0.45" textLength="302.5" lengthAdjust="spacingAndGlyphs" text-anchor="start" >Data Color Legend</text>
<text x="2373.0" y="1960.6" font-size="36" fill="#3cc43f" stroke="#3cc43f" stroke-width="0.45" textLength="46.6" lengthAdjust="spacingAndGlyphs" text-anchor="start" >OK</text>
<text x="2471.0" y="1960.6" font-size="36" fill="#e6e040" stroke="#e6e040" stroke-width="0.45" textLength="98.0" lengthAdjust="spacingAndGlyphs" text-anchor="start" >Aging</text>
<text x="2620.8" y="1960.6" font-size="36" fill="#c03c4e" stroke="#c03c4e" stroke-width="0.45" textLength="51.5" lengthAdjust="spacingAndGlyphs" text-anchor="start" >Old</text>
<line x1="124.0" y1="649.4" x2="148.0" y2="649.4" stroke="#45556a" stroke-width="3.0" />
<line x1="127.0" y1="652.4" x2="148.0" y2="652.4" stroke="#b9c9da" stroke-width="3.0" />
<line x1="431.0" y1="649.4" x2="843.0" y2="649.4" stroke="#45556a" stroke-width="3.0" />
<line x1="431.0" y1="652.4" x2="843.0" y2="652.4" stroke="#b9c9da" stroke-width="3.0" />
<line x1="124.0" y1="647.9" x2="124.0" y2="1349.6" stroke="#45556a" stroke-width="3.0" />
<line x1="127.0" y1="650.9" x2="127.0" y2="1346.6" stroke="#b9c9da" stroke-width="3.0" />
<line x1="122.5" y1="1349.6" x2="843.0" y2="1349.6" stroke="#45556a" stroke-width="3.0" />
<line x1="122.5" y1="1352.6" x2="847.5" y2="1352.6" stroke="#b9c9da" stroke-width="3.0" />
<line x1="843.0" y1="647.9" x2="843.0" y2="1351.1" stroke="#45556a" stroke-width="3.0" />
<line x1="846.0" y1="647.9" x2="846.0" y2="1354.1" stroke="#b9c9da" stroke-width="3.0" />
<text x="157.0" y="668.0" font-size="37" fill="#e9f1fa" stroke="#e9f1fa" stroke-width="0.45" textLength="265.0" lengthAdjust="spacingAndGlyphs" text-anchor="start" >Temperature °F</text>
<line x1="152.0" y1="691.5" x2="833.5" y2="691.5" stroke="#5c6c80" stroke-width="3" />
<line x1="153.5" y1="690.0" x2="153.5" y2="1339.0" stroke="#5c6c80" stroke-width="3" />
<line x1="152.0" y1="1338.0" x2="833.5" y2="1338.0" stroke="#64758a" stroke-width="2.5" />
<line x1="832.5" y1="690.0" x2="832.5" y2="1339.0" stroke="#64758a" stroke-width="2.5" />
<rect x="240.4" y="796.6" width="544.4" height="481.4" fill="#454c56" />
<rect x="240.4" y="796.6" width="34.4" height="481.4" fill="#8b95a3" opacity="0.2"/>
<rect x="771.0" y="796.6" width="13.8" height="481.4" fill="#8b95a3" opacity="0.2"/>
<line x1="274.8" y1="796.6" x2="274.8" y2="1287.0" stroke="#05070a" stroke-width="3.6" />
<line x1="365.8" y1="796.6" x2="365.8" y2="1287.0" stroke="#05070a" stroke-width="3.6" />
<line x1="453.9" y1="796.6" x2="453.9" y2="1287.0" stroke="#05070a" stroke-width="3.6" />
<line x1="544.0" y1="796.6" x2="544.0" y2="1287.0" stroke="#05070a" stroke-width="3.6" />
<line x1="634.7" y1="796.6" x2="634.7" y2="1287.0" stroke="#05070a" stroke-width="3.6" />
<line x1="726.0" y1="796.6" x2="726.0" y2="1287.0" stroke="#05070a" stroke-width="3.6" />
<line x1="233.4" y1="894.0" x2="784.8" y2="894.0" stroke="#05070a" stroke-width="3.6" />
<line x1="233.4" y1="990.0" x2="784.8" y2="990.0" stroke="#05070a" stroke-width="3.6" />
<line x1="233.4" y1="1084.0" x2="784.8" y2="1084.0" stroke="#05070a" stroke-width="3.6" />
<line x1="233.4" y1="1181.6" x2="784.8" y2="1181.6" stroke="#05070a" stroke-width="3.6" />
<rect x="238.9" y="795.4" width="546.4" height="3.1" fill="#05070a" />
<rect x="238.9" y="795.4" width="3.0" height="484.1" fill="#05070a" />
<rect x="782.3" y="795.4" width="3.0" height="484.1" fill="#05070a" />
<rect x="233.4" y="1276.5" width="551.9" height="3.0" fill="#05070a" />
<line x1="239.4" y1="816.1" x2="245.4" y2="816.1" stroke="#05070a" stroke-width="2.2" />
<line x1="239.4" y1="835.6" x2="245.4" y2="835.6" stroke="#05070a" stroke-width="2.2" />
<line x1="239.4" y1="855.0" x2="245.4" y2="855.0" stroke="#05070a" stroke-width="2.2" />
<line x1="239.4" y1="874.5" x2="245.4" y2="874.5" stroke="#05070a" stroke-width="2.2" />
<line x1="239.4" y1="913.2" x2="245.4" y2="913.2" stroke="#05070a" stroke-width="2.2" />
<line x1="239.4" y1="932.4" x2="245.4" y2="932.4" stroke="#05070a" stroke-width="2.2" />
<line x1="239.4" y1="951.6" x2="245.4" y2="951.6" stroke="#05070a" stroke-width="2.2" />
<line x1="239.4" y1="970.8" x2="245.4" y2="970.8" stroke="#05070a" stroke-width="2.2" />
<line x1="239.4" y1="1008.8" x2="245.4" y2="1008.8" stroke="#05070a" stroke-width="2.2" />
<line x1="239.4" y1="1027.6" x2="245.4" y2="1027.6" stroke="#05070a" stroke-width="2.2" />
<line x1="239.4" y1="1046.4" x2="245.4" y2="1046.4" stroke="#05070a" stroke-width="2.2" />
<line x1="239.4" y1="1065.2" x2="245.4" y2="1065.2" stroke="#05070a" stroke-width="2.2" />
<line x1="239.4" y1="1103.5" x2="245.4" y2="1103.5" stroke="#05070a" stroke-width="2.2" />
<line x1="239.4" y1="1123.0" x2="245.4" y2="1123.0" stroke="#05070a" stroke-width="2.2" />
<line x1="239.4" y1="1142.6" x2="245.4" y2="1142.6" stroke="#05070a" stroke-width="2.2" />
<line x1="239.4" y1="1162.1" x2="245.4" y2="1162.1" stroke="#05070a" stroke-width="2.2" />
<line x1="239.4" y1="1200.9" x2="245.4" y2="1200.9" stroke="#05070a" stroke-width="2.2" />
<line x1="239.4" y1="1220.2" x2="245.4" y2="1220.2" stroke="#05070a" stroke-width="2.2" />
<line x1="239.4" y1="1239.4" x2="245.4" y2="1239.4" stroke="#05070a" stroke-width="2.2" />
<line x1="239.4" y1="1258.7" x2="245.4" y2="1258.7" stroke="#05070a" stroke-width="2.2" />
<line x1="274.8" y1="1278.0" x2="274.8" y2="1283.0" stroke="#05070a" stroke-width="2.2" />
<line x1="320.0" y1="1278.0" x2="320.0" y2="1283.0" stroke="#05070a" stroke-width="2.2" />
<line x1="411.0" y1="1278.0" x2="411.0" y2="1283.0" stroke="#05070a" stroke-width="2.2" />
<line x1="499.1" y1="1278.0" x2="499.1" y2="1283.0" stroke="#05070a" stroke-width="2.2" />
<line x1="589.2" y1="1278.0" x2="589.2" y2="1283.0" stroke="#05070a" stroke-width="2.2" />
<line x1="679.9" y1="1278.0" x2="679.9" y2="1283.0" stroke="#05070a" stroke-width="2.2" />
<line x1="771.0" y1="1278.0" x2="771.0" y2="1283.0" stroke="#05070a" stroke-width="2.2" />
<text x="193.5" y="808.8" font-size="30" fill="#121923" stroke="#121923" stroke-width="0.7" text-anchor="middle" >40</text>
<text x="193.5" y="904.8" font-size="30" fill="#121923" stroke="#121923" stroke-width="0.7" text-anchor="middle" >30</text>
<text x="193.5" y="1000.8" font-size="30" fill="#121923" stroke="#121923" stroke-width="0.7" text-anchor="middle" >20</text>
<text x="193.5" y="1094.8" font-size="30" fill="#121923" stroke="#121923" stroke-width="0.7" text-anchor="middle" >10</text>
<text x="193.5" y="1192.4" font-size="30" fill="#121923" stroke="#121923" stroke-width="0.7" text-anchor="middle" >0</text>
<text x="193.5" y="1289.8" font-size="30" fill="#121923" stroke="#121923" stroke-width="0.7" text-anchor="middle" >-10</text>
<text x="236.0" y="1324.5" font-size="30" fill="#121923" stroke="#121923" stroke-width="0.7" textLength="77.0" lengthAdjust="spacingAndGlyphs" text-anchor="start" >12:00</text>
<text x="329.0" y="1324.5" font-size="30" fill="#121923" stroke="#121923" stroke-width="0.7" textLength="75.0" lengthAdjust="spacingAndGlyphs" text-anchor="start" >14:00</text>
<text x="419.0" y="1324.5" font-size="30" fill="#121923" stroke="#121923" stroke-width="0.7" textLength="75.0" lengthAdjust="spacingAndGlyphs" text-anchor="start" >16:00</text>
<text x="506.5" y="1324.5" font-size="30" fill="#121923" stroke="#121923" stroke-width="0.7" textLength="76.5" lengthAdjust="spacingAndGlyphs" text-anchor="start" >18:00</text>
<text x="596.0" y="1324.5" font-size="30" fill="#121923" stroke="#121923" stroke-width="0.7" textLength="77.0" lengthAdjust="spacingAndGlyphs" text-anchor="start" >20:00</text>
<text x="687.0" y="1324.5" font-size="30" fill="#121923" stroke="#121923" stroke-width="0.7" textLength="77.0" lengthAdjust="spacingAndGlyphs" text-anchor="start" >22:00</text>
<text x="252.0" y="738.0" font-size="26" fill="#c2333a" stroke="#c2333a" stroke-width="0.45" textLength="167.0" lengthAdjust="spacingAndGlyphs" text-anchor="start" >Freezer Tmp</text>
<text x="449.0" y="738.0" font-size="26" fill="#9a8468" stroke="#9a8468" stroke-width="0.45" textLength="167.0" lengthAdjust="spacingAndGlyphs" text-anchor="start" opacity="0.55">Fridge Tmp</text>
<text x="254.0" y="773.0" font-size="26" fill="#f2b035" stroke="#f2b035" stroke-width="0.45" textLength="166.5" lengthAdjust="spacingAndGlyphs" text-anchor="start" >Fridge2 Tmp</text>
<polygon points="242.0,830.1 254.9,821.0 273.6,847.0 309.8,821.0 328.9,847.0 366.0,821.0 384.3,847.0 419.7,821.0 435.3,847.0 465.5,821.0 489.1,847.0 534.9,821.0 552.7,847.0 587.2,821.0 603.2,847.0 634.3,821.0 650.3,847.0 681.4,821.0 697.0,847.0 727.2,821.0 744.6,847.0 778.3,821.0 782.0,827.0 783.0,840.5 779.3,834.5 745.6,860.5 728.2,834.5 698.0,860.5 682.4,834.5 651.3,860.5 635.3,834.5 604.2,860.5 588.2,834.5 553.7,860.5 535.9,834.5 490.1,860.5 466.5,834.5 436.3,860.5 420.7,834.5 385.3,860.5 367.0,834.5 329.9,860.5 310.8,834.5 274.6,860.5 255.9,834.5 243.0,843.6" fill="#7a6428" opacity="0.55"/>
<polyline points="242.0,830.1 254.9,821.0 273.6,847.0 309.8,821.0 328.9,847.0 366.0,821.0 384.3,847.0 419.7,821.0 435.3,847.0 465.5,821.0 489.1,847.0 534.9,821.0 552.7,847.0 587.2,821.0 603.2,847.0 634.3,821.0 650.3,847.0 681.4,821.0 697.0,847.0 727.2,821.0 744.6,847.0 778.3,821.0 782.0,827.0" fill="none" stroke="#cf9038" stroke-width="2.8" opacity="0.95"/>
<polyline points="243.0,843.6 255.9,834.5 274.6,860.5 310.8,834.5 329.9,860.5 367.0,834.5 385.3,860.5 420.7,834.5 436.3,860.5 466.5,834.5 490.1,860.5 535.9,834.5 553.7,860.5 588.2,834.5 604.2,860.5 635.3,834.5 651.3,860.5 682.4,834.5 698.0,860.5 728.2,834.5 745.6,860.5 779.3,834.5 783.0,840.5" fill="none" stroke="#f4d57a" stroke-width="2.8"/>
<rect x="243.0" y="1168.0" width="231.0" height="38.0" fill="#93304a" opacity="0.3"/>
<polyline points="243.0,1204.0 249.5,1171.0 256.0,1204.0 262.5,1171.0 269.0,1204.0 275.5,1171.0 282.0,1204.0 288.5,1171.0 295.0,1204.0 301.5,1171.0 308.0,1204.0 314.5,1171.0 321.0,1204.0 327.5,1171.0 334.0,1204.0 340.5,1171.0 347.0,1204.0 353.5,1171.0 360.0,1204.0 366.5,1171.0 373.0,1204.0 379.5,1171.0 386.0,1204.0 392.5,1171.0 399.0,1204.0 405.5,1171.0 412.0,1204.0 418.5,1171.0 425.0,1204.0 431.5,1171.0 438.0,1204.0 444.5,1171.0 451.0,1204.0 457.5,1171.0 464.0,1204.0 470.5,1171.0" fill="none" stroke="#a82a42" stroke-width="4" opacity="0.7"/>
<rect x="533.0" y="1168.0" width="247.0" height="38.0" fill="#93304a" opacity="0.3"/>
<polyline points="533.0,1204.0 539.5,1171.0 546.0,1204.0 552.5,1171.0 559.0,1204.0 565.5,1171.0 572.0,1204.0 578.5,1171.0 585.0,1204.0 591.5,1171.0 598.0,1204.0 604.5,1171.0 611.0,1204.0 617.5,1171.0 624.0,1204.0 630.5,1171.0 637.0,1204.0 643.5,1171.0 650.0,1204.0 656.5,1171.0 663.0,1204.0 669.5,1171.0 676.0,1204.0 682.5,1171.0 689.0,1204.0 695.5,1171.0 702.0,1204.0 708.5,1171.0 715.0,1204.0 721.5,1171.0 728.0,1204.0 734.5,1171.0 741.0,1204.0 747.5,1171.0 754.0,1204.0 760.5,1171.0 767.0,1204.0 773.5,1171.0" fill="none" stroke="#a82a42" stroke-width="4" opacity="0.7"/>
<line x1="860.7" y1="649.4" x2="885.8" y2="649.4" stroke="#45556a" stroke-width="3.0" />
<line x1="863.7" y1="652.4" x2="885.8" y2="652.4" stroke="#b9c9da" stroke-width="3.0" />
<line x1="1250.8" y1="649.4" x2="1580.6" y2="649.4" stroke="#45556a" stroke-width="3.0" />
<line x1="1250.8" y1="652.4" x2="1580.6" y2="652.4" stroke="#b9c9da" stroke-width="3.0" />
<line x1="860.7" y1="647.9" x2="860.7" y2="1349.6" stroke="#45556a" stroke-width="3.0" />
<line x1="863.7" y1="650.9" x2="863.7" y2="1346.6" stroke="#b9c9da" stroke-width="3.0" />
<line x1="859.2" y1="1349.6" x2="1580.6" y2="1349.6" stroke="#45556a" stroke-width="3.0" />
<line x1="859.2" y1="1352.6" x2="1585.1" y2="1352.6" stroke="#b9c9da" stroke-width="3.0" />
<line x1="1580.6" y1="647.9" x2="1580.6" y2="1351.1" stroke="#45556a" stroke-width="3.0" />
<line x1="1583.6" y1="647.9" x2="1583.6" y2="1354.1" stroke="#b9c9da" stroke-width="3.0" />
<text x="894.8" y="668.0" font-size="37" fill="#e9f1fa" stroke="#e9f1fa" stroke-width="0.45" textLength="347.0" lengthAdjust="spacingAndGlyphs" text-anchor="start" >QFE Barometer  inHg</text>
<rect x="1009.4" y="703.2" width="510.1" height="571.3" fill="#454c56" />
<rect x="1009.4" y="703.2" width="31.2" height="571.3" fill="#8b95a3" opacity="0.2"/>
<line x1="1040.6" y1="703.2" x2="1040.6" y2="1283.5" stroke="#05070a" stroke-width="3.6" />
<line x1="1124.9" y1="703.2" x2="1124.9" y2="1283.5" stroke="#05070a" stroke-width="3.6" />
<line x1="1209.6" y1="703.2" x2="1209.6" y2="1283.5" stroke="#05070a" stroke-width="3.6" />
<line x1="1294.8" y1="703.2" x2="1294.8" y2="1283.5" stroke="#05070a" stroke-width="3.6" />
<line x1="1380.0" y1="703.2" x2="1380.0" y2="1283.5" stroke="#05070a" stroke-width="3.6" />
<line x1="1463.8" y1="703.2" x2="1463.8" y2="1283.5" stroke="#05070a" stroke-width="3.6" />
<line x1="1002.4" y1="764.0" x2="1519.5" y2="764.0" stroke="#05070a" stroke-width="3.6" />
<line x1="1002.4" y1="821.1" x2="1519.5" y2="821.1" stroke="#05070a" stroke-width="3.6" />
<line x1="1002.4" y1="878.2" x2="1519.5" y2="878.2" stroke="#05070a" stroke-width="3.6" />
<line x1="1002.4" y1="935.2" x2="1519.5" y2="935.2" stroke="#05070a" stroke-width="3.6" />
<line x1="1002.4" y1="992.3" x2="1519.5" y2="992.3" stroke="#05070a" stroke-width="3.6" />
<line x1="1002.4" y1="1049.4" x2="1519.5" y2="1049.4" stroke="#05070a" stroke-width="3.6" />
<line x1="1002.4" y1="1106.5" x2="1519.5" y2="1106.5" stroke="#05070a" stroke-width="3.6" />
<line x1="1002.4" y1="1163.5" x2="1519.5" y2="1163.5" stroke="#05070a" stroke-width="3.6" />
<line x1="1002.4" y1="1220.6" x2="1519.5" y2="1220.6" stroke="#05070a" stroke-width="3.6" />
<rect x="1007.9" y="702.0" width="512.1" height="6.0" fill="#05070a" />
<rect x="1007.9" y="702.0" width="3.0" height="574.0" fill="#05070a" />
<rect x="1517.0" y="702.0" width="3.0" height="574.0" fill="#05070a" />
<rect x="1002.4" y="1273.0" width="517.6" height="3.0" fill="#05070a" />
<line x1="1002.4" y1="705.0" x2="1009.4" y2="705.0" stroke="#05070a" stroke-width="3.6" />
<line x1="1008.4" y1="715.4" x2="1014.4" y2="715.4" stroke="#05070a" stroke-width="2.2" />
<line x1="1008.4" y1="727.5" x2="1014.4" y2="727.5" stroke="#05070a" stroke-width="2.2" />
<line x1="1008.4" y1="739.7" x2="1014.4" y2="739.7" stroke="#05070a" stroke-width="2.2" />
<line x1="1008.4" y1="751.8" x2="1014.4" y2="751.8" stroke="#05070a" stroke-width="2.2" />
<line x1="1008.4" y1="775.4" x2="1014.4" y2="775.4" stroke="#05070a" stroke-width="2.2" />
<line x1="1008.4" y1="786.8" x2="1014.4" y2="786.8" stroke="#05070a" stroke-width="2.2" />
<line x1="1008.4" y1="798.3" x2="1014.4" y2="798.3" stroke="#05070a" stroke-width="2.2" />
<line x1="1008.4" y1="809.7" x2="1014.4" y2="809.7" stroke="#05070a" stroke-width="2.2" />
<line x1="1008.4" y1="832.5" x2="1014.4" y2="832.5" stroke="#05070a" stroke-width="2.2" />
<line x1="1008.4" y1="843.9" x2="1014.4" y2="843.9" stroke="#05070a" stroke-width="2.2" />
<line x1="1008.4" y1="855.4" x2="1014.4" y2="855.4" stroke="#05070a" stroke-width="2.2" />
<line x1="1008.4" y1="866.8" x2="1014.4" y2="866.8" stroke="#05070a" stroke-width="2.2" />
<line x1="1008.4" y1="889.6" x2="1014.4" y2="889.6" stroke="#05070a" stroke-width="2.2" />
<line x1="1008.4" y1="901.0" x2="1014.4" y2="901.0" stroke="#05070a" stroke-width="2.2" />
<line x1="1008.4" y1="912.4" x2="1014.4" y2="912.4" stroke="#05070a" stroke-width="2.2" />
<line x1="1008.4" y1="923.8" x2="1014.4" y2="923.8" stroke="#05070a" stroke-width="2.2" />
<line x1="1008.4" y1="946.6" x2="1014.4" y2="946.6" stroke="#05070a" stroke-width="2.2" />
<line x1="1008.4" y1="958.0" x2="1014.4" y2="958.0" stroke="#05070a" stroke-width="2.2" />
<line x1="1008.4" y1="969.5" x2="1014.4" y2="969.5" stroke="#05070a" stroke-width="2.2" />
<line x1="1008.4" y1="980.9" x2="1014.4" y2="980.9" stroke="#05070a" stroke-width="2.2" />
<line x1="1008.4" y1="1003.7" x2="1014.4" y2="1003.7" stroke="#05070a" stroke-width="2.2" />
<line x1="1008.4" y1="1015.1" x2="1014.4" y2="1015.1" stroke="#05070a" stroke-width="2.2" />
<line x1="1008.4" y1="1026.6" x2="1014.4" y2="1026.6" stroke="#05070a" stroke-width="2.2" />
<line x1="1008.4" y1="1038.0" x2="1014.4" y2="1038.0" stroke="#05070a" stroke-width="2.2" />
<line x1="1008.4" y1="1060.8" x2="1014.4" y2="1060.8" stroke="#05070a" stroke-width="2.2" />
<line x1="1008.4" y1="1072.2" x2="1014.4" y2="1072.2" stroke="#05070a" stroke-width="2.2" />
<line x1="1008.4" y1="1083.7" x2="1014.4" y2="1083.7" stroke="#05070a" stroke-width="2.2" />
<line x1="1008.4" y1="1095.1" x2="1014.4" y2="1095.1" stroke="#05070a" stroke-width="2.2" />
<line x1="1008.4" y1="1117.9" x2="1014.4" y2="1117.9" stroke="#05070a" stroke-width="2.2" />
<line x1="1008.4" y1="1129.3" x2="1014.4" y2="1129.3" stroke="#05070a" stroke-width="2.2" />
<line x1="1008.4" y1="1140.7" x2="1014.4" y2="1140.7" stroke="#05070a" stroke-width="2.2" />
<line x1="1008.4" y1="1152.1" x2="1014.4" y2="1152.1" stroke="#05070a" stroke-width="2.2" />
<line x1="1008.4" y1="1174.9" x2="1014.4" y2="1174.9" stroke="#05070a" stroke-width="2.2" />
<line x1="1008.4" y1="1186.3" x2="1014.4" y2="1186.3" stroke="#05070a" stroke-width="2.2" />
<line x1="1008.4" y1="1197.8" x2="1014.4" y2="1197.8" stroke="#05070a" stroke-width="2.2" />
<line x1="1008.4" y1="1209.2" x2="1014.4" y2="1209.2" stroke="#05070a" stroke-width="2.2" />
<line x1="1008.4" y1="1231.4" x2="1014.4" y2="1231.4" stroke="#05070a" stroke-width="2.2" />
<line x1="1008.4" y1="1242.2" x2="1014.4" y2="1242.2" stroke="#05070a" stroke-width="2.2" />
<line x1="1008.4" y1="1252.9" x2="1014.4" y2="1252.9" stroke="#05070a" stroke-width="2.2" />
<line x1="1008.4" y1="1263.7" x2="1014.4" y2="1263.7" stroke="#05070a" stroke-width="2.2" />
<line x1="1082.6" y1="1274.5" x2="1082.6" y2="1279.5" stroke="#05070a" stroke-width="2.2" />
<line x1="1166.9" y1="1274.5" x2="1166.9" y2="1279.5" stroke="#05070a" stroke-width="2.2" />
<line x1="1251.6" y1="1274.5" x2="1251.6" y2="1279.5" stroke="#05070a" stroke-width="2.2" />
<line x1="1336.8" y1="1274.5" x2="1336.8" y2="1279.5" stroke="#05070a" stroke-width="2.2" />
<line x1="1422.0" y1="1274.5" x2="1422.0" y2="1279.5" stroke="#05070a" stroke-width="2.2" />
<line x1="1505.8" y1="1274.5" x2="1505.8" y2="1279.5" stroke="#05070a" stroke-width="2.2" />
<text x="942.7" y="717.8" font-size="30" fill="#121923" stroke="#121923" stroke-width="0.7" text-anchor="middle" >28.88</text>
<text x="942.7" y="774.8" font-size="30" fill="#121923" stroke="#121923" stroke-width="0.7" text-anchor="middle" >28.87</text>
<text x="942.7" y="831.9" font-size="30" fill="#121923" stroke="#121923" stroke-width="0.7" text-anchor="middle" >28.86</text>
<text x="942.7" y="889.0" font-size="30" fill="#121923" stroke="#121923" stroke-width="0.7" text-anchor="middle" >28.85</text>
<text x="942.7" y="946.0" font-size="30" fill="#121923" stroke="#121923" stroke-width="0.7" text-anchor="middle" >28.84</text>
<text x="942.7" y="1003.1" font-size="30" fill="#121923" stroke="#121923" stroke-width="0.7" text-anchor="middle" >28.83</text>
<text x="942.7" y="1060.2" font-size="30" fill="#121923" stroke="#121923" stroke-width="0.7" text-anchor="middle" >28.82</text>
<text x="942.7" y="1117.3" font-size="30" fill="#121923" stroke="#121923" stroke-width="0.7" text-anchor="middle" >28.81</text>
<text x="942.7" y="1174.3" font-size="30" fill="#121923" stroke="#121923" stroke-width="0.7" text-anchor="middle" >28.80</text>
<text x="942.7" y="1231.4" font-size="30" fill="#121923" stroke="#121923" stroke-width="0.7" text-anchor="middle" >28.79</text>
<text x="1004.0" y="1323.0" font-size="30" fill="#121923" stroke="#121923" stroke-width="0.7" textLength="74.0" lengthAdjust="spacingAndGlyphs" text-anchor="start" >12:00</text>
<text x="1172.5" y="1323.0" font-size="30" fill="#121923" stroke="#121923" stroke-width="0.7" textLength="76.0" lengthAdjust="spacingAndGlyphs" text-anchor="start" >16:00</text>
<text x="1339.0" y="1323.0" font-size="30" fill="#121923" stroke="#121923" stroke-width="0.7" textLength="78.0" lengthAdjust="spacingAndGlyphs" text-anchor="start" >20:00</text>
<polyline points="1012.3,960.1 1018.6,962.2 1022.8,954.5 1027.1,958.6 1032.1,943.1 1037.6,935.7 1040.6,945.9 1043.9,944.0 1050.3,949.2 1056.6,957.2 1060.8,953.4 1065.0,958.2 1069.2,955.4 1074.5,962.9 1079.8,959.6 1086.1,972.5 1090.3,970.6 1094.5,980.7 1100.8,973.6 1107.2,984.2 1113.5,996.5 1118.8,1011.4 1124.0,1019.0 1130.4,1018.9 1136.7,1013.3 1143.0,1025.6 1149.3,1028.4 1153.5,1039.8 1157.8,1042.3 1162.0,1054.3 1166.2,1054.8 1170.4,1063.3 1174.6,1061.2 1178.8,1069.7 1183.1,1067.6 1189.4,1074.2 1195.7,1074.9 1202.0,1077.8 1208.3,1068.9 1214.7,1089.8 1221.0,1093.2 1225.2,1086.7 1229.4,1084.8 1233.6,1096.9 1237.9,1100.7 1242.1,1112.4 1246.3,1113.2 1252.6,1110.2 1258.9,1100.3 1263.2,1102.8 1267.4,1089.6 1271.6,1105.7 1273.7,1113.0 1280.0,1114.6 1284.2,1109.7 1288.4,1116.6 1292.7,1116.9 1296.9,1125.5 1300.3,1111.2 1303.2,1110.0 1309.5,1102.1 1313.7,1103.8 1318.0,1096.1 1324.3,1100.5 1330.6,1099.9 1334.8,1105.7 1339.0,1106.3 1343.3,1105.3 1347.5,1096.4 1353.8,1095.0 1360.1,1077.9 1364.3,1073.5 1368.5,1059.7 1374.9,1056.1 1381.2,1043.0 1385.4,1040.1 1389.6,1028.3 1393.8,1022.8 1398.1,1009.1 1402.3,1002.5 1406.5,986.4 1410.7,984.6 1414.9,970.9 1419.1,967.9 1423.4,952.2 1427.6,952.2 1431.8,942.4 1436.0,945.3 1440.2,937.6 1444.4,934.4 1448.7,920.5 1452.9,918.1 1457.1,906.7 1461.3,909.9 1465.5,899.3 1471.8,884.0 1478.2,863.4 1482.4,857.1 1486.6,855.0 1490.8,854.0 1495.0,852.9 1501.3,855.9 1505.6,857.1 1506.8,893.0 1508.5,918.2 1509.8,952.0 1511.0,977.3 1514.0,982.3 1516.1,983.6" fill="none" stroke="#1f8fc4" stroke-width="6" stroke-linejoin="round" stroke-linecap="round" opacity="0.75" />
<polyline points="1012.3,960.1 1018.6,962.2 1022.8,954.5 1027.1,958.6 1032.1,943.1 1037.6,935.7 1040.6,945.9 1043.9,944.0 1050.3,949.2 1056.6,957.2 1060.8,953.4 1065.0,958.2 1069.2,955.4 1074.5,962.9 1079.8,959.6 1086.1,972.5 1090.3,970.6 1094.5,980.7 1100.8,973.6 1107.2,984.2 1113.5,996.5 1118.8,1011.4 1124.0,1019.0 1130.4,1018.9 1136.7,1013.3 1143.0,1025.6 1149.3,1028.4 1153.5,1039.8 1157.8,1042.3 1162.0,1054.3 1166.2,1054.8 1170.4,1063.3 1174.6,1061.2 1178.8,1069.7 1183.1,1067.6 1189.4,1074.2 1195.7,1074.9 1202.0,1077.8 1208.3,1068.9 1214.7,1089.8 1221.0,1093.2 1225.2,1086.7 1229.4,1084.8 1233.6,1096.9 1237.9,1100.7 1242.1,1112.4 1246.3,1113.2 1252.6,1110.2 1258.9,1100.3 1263.2,1102.8 1267.4,1089.6 1271.6,1105.7 1273.7,1113.0 1280.0,1114.6 1284.2,1109.7 1288.4,1116.6 1292.7,1116.9 1296.9,1125.5 1300.3,1111.2 1303.2,1110.0 1309.5,1102.1 1313.7,1103.8 1318.0,1096.1 1324.3,1100.5 1330.6,1099.9 1334.8,1105.7 1339.0,1106.3 1343.3,1105.3 1347.5,1096.4 1353.8,1095.0 1360.1,1077.9 1364.3,1073.5 1368.5,1059.7 1374.9,1056.1 1381.2,1043.0 1385.4,1040.1 1389.6,1028.3 1393.8,1022.8 1398.1,1009.1 1402.3,1002.5 1406.5,986.4 1410.7,984.6 1414.9,970.9 1419.1,967.9 1423.4,952.2 1427.6,952.2 1431.8,942.4 1436.0,945.3 1440.2,937.6 1444.4,934.4 1448.7,920.5 1452.9,918.1 1457.1,906.7 1461.3,909.9 1465.5,899.3 1471.8,884.0 1478.2,863.4 1482.4,857.1 1486.6,855.0 1490.8,854.0 1495.0,852.9 1501.3,855.9 1505.6,857.1 1506.8,893.0 1508.5,918.2 1509.8,952.0 1511.0,977.3 1514.0,982.3 1516.1,983.6" fill="none" stroke="#4accf0" stroke-width="2.8" stroke-linejoin="round" stroke-linecap="round" opacity="1" />
<line x1="1601.8" y1="649.5" x2="1626.5" y2="649.5" stroke="#45556a" stroke-width="3.0" />
<line x1="1604.8" y1="652.5" x2="1626.5" y2="652.5" stroke="#b9c9da" stroke-width="3.0" />
<line x1="2102.5" y1="649.5" x2="2320.4" y2="649.5" stroke="#45556a" stroke-width="3.0" />
<line x1="2102.5" y1="652.5" x2="2320.4" y2="652.5" stroke="#b9c9da" stroke-width="3.0" />
<line x1="1601.8" y1="648.0" x2="1601.8" y2="1349.6" stroke="#45556a" stroke-width="3.0" />
<line x1="1604.8" y1="651.0" x2="1604.8" y2="1346.6" stroke="#b9c9da" stroke-width="3.0" />
<line x1="1600.3" y1="1349.6" x2="2320.4" y2="1349.6" stroke="#45556a" stroke-width="3.0" />
<line x1="1600.3" y1="1352.6" x2="2324.9" y2="1352.6" stroke="#b9c9da" stroke-width="3.0" />
<line x1="2320.4" y1="648.0" x2="2320.4" y2="1351.1" stroke="#45556a" stroke-width="3.0" />
<line x1="2323.4" y1="648.0" x2="2323.4" y2="1354.1" stroke="#b9c9da" stroke-width="3.0" />
<text x="1635.5" y="668.0" font-size="37" fill="#e9f1fa" stroke="#e9f1fa" stroke-width="0.45" textLength="458.0" lengthAdjust="spacingAndGlyphs" text-anchor="start" >Temperature, Dew Point °F</text>
<rect x="1703.0" y="830.6" width="554.0" height="443.0" fill="#454c56" />
<line x1="1739.7" y1="830.6" x2="1739.7" y2="1282.6" stroke="#05070a" stroke-width="3.6" />
<line x1="1830.3" y1="830.6" x2="1830.3" y2="1282.6" stroke="#05070a" stroke-width="3.6" />
<line x1="1921.0" y1="830.6" x2="1921.0" y2="1282.6" stroke="#05070a" stroke-width="3.6" />
<line x1="2015.0" y1="830.6" x2="2015.0" y2="1282.6" stroke="#05070a" stroke-width="3.6" />
<line x1="2106.4" y1="830.6" x2="2106.4" y2="1282.6" stroke="#05070a" stroke-width="3.6" />
<line x1="2200.0" y1="830.6" x2="2200.0" y2="1282.6" stroke="#05070a" stroke-width="3.6" />
<line x1="1696.0" y1="894.0" x2="2257.0" y2="894.0" stroke="#05070a" stroke-width="3.6" />
<line x1="1696.0" y1="957.0" x2="2257.0" y2="957.0" stroke="#05070a" stroke-width="3.6" />
<line x1="1696.0" y1="1021.5" x2="2257.0" y2="1021.5" stroke="#05070a" stroke-width="3.6" />
<line x1="1696.0" y1="1084.8" x2="2257.0" y2="1084.8" stroke="#05070a" stroke-width="3.6" />
<line x1="1696.0" y1="1148.9" x2="2257.0" y2="1148.9" stroke="#05070a" stroke-width="3.6" />
<line x1="1696.0" y1="1211.0" x2="2257.0" y2="1211.0" stroke="#05070a" stroke-width="3.6" />
<rect x="1701.5" y="829.4" width="556.0" height="3.1" fill="#05070a" />
<rect x="1701.5" y="829.4" width="3.0" height="445.7" fill="#05070a" />
<rect x="2254.5" y="829.4" width="3.0" height="445.7" fill="#05070a" />
<rect x="1696.0" y="1272.1" width="561.5" height="3.0" fill="#05070a" />
<line x1="1702.0" y1="843.3" x2="1708.0" y2="843.3" stroke="#05070a" stroke-width="2.2" />
<line x1="1702.0" y1="856.0" x2="1708.0" y2="856.0" stroke="#05070a" stroke-width="2.2" />
<line x1="1702.0" y1="868.6" x2="1708.0" y2="868.6" stroke="#05070a" stroke-width="2.2" />
<line x1="1702.0" y1="881.3" x2="1708.0" y2="881.3" stroke="#05070a" stroke-width="2.2" />
<line x1="1702.0" y1="906.6" x2="1708.0" y2="906.6" stroke="#05070a" stroke-width="2.2" />
<line x1="1702.0" y1="919.2" x2="1708.0" y2="919.2" stroke="#05070a" stroke-width="2.2" />
<line x1="1702.0" y1="931.8" x2="1708.0" y2="931.8" stroke="#05070a" stroke-width="2.2" />
<line x1="1702.0" y1="944.4" x2="1708.0" y2="944.4" stroke="#05070a" stroke-width="2.2" />
<line x1="1702.0" y1="969.9" x2="1708.0" y2="969.9" stroke="#05070a" stroke-width="2.2" />
<line x1="1702.0" y1="982.8" x2="1708.0" y2="982.8" stroke="#05070a" stroke-width="2.2" />
<line x1="1702.0" y1="995.7" x2="1708.0" y2="995.7" stroke="#05070a" stroke-width="2.2" />
<line x1="1702.0" y1="1008.6" x2="1708.0" y2="1008.6" stroke="#05070a" stroke-width="2.2" />
<line x1="1702.0" y1="1034.2" x2="1708.0" y2="1034.2" stroke="#05070a" stroke-width="2.2" />
<line x1="1702.0" y1="1046.8" x2="1708.0" y2="1046.8" stroke="#05070a" stroke-width="2.2" />
<line x1="1702.0" y1="1059.5" x2="1708.0" y2="1059.5" stroke="#05070a" stroke-width="2.2" />
<line x1="1702.0" y1="1072.1" x2="1708.0" y2="1072.1" stroke="#05070a" stroke-width="2.2" />
<line x1="1702.0" y1="1097.6" x2="1708.0" y2="1097.6" stroke="#05070a" stroke-width="2.2" />
<line x1="1702.0" y1="1110.4" x2="1708.0" y2="1110.4" stroke="#05070a" stroke-width="2.2" />
<line x1="1702.0" y1="1123.3" x2="1708.0" y2="1123.3" stroke="#05070a" stroke-width="2.2" />
<line x1="1702.0" y1="1136.1" x2="1708.0" y2="1136.1" stroke="#05070a" stroke-width="2.2" />
<line x1="1702.0" y1="1161.3" x2="1708.0" y2="1161.3" stroke="#05070a" stroke-width="2.2" />
<line x1="1702.0" y1="1173.7" x2="1708.0" y2="1173.7" stroke="#05070a" stroke-width="2.2" />
<line x1="1702.0" y1="1186.2" x2="1708.0" y2="1186.2" stroke="#05070a" stroke-width="2.2" />
<line x1="1702.0" y1="1198.6" x2="1708.0" y2="1198.6" stroke="#05070a" stroke-width="2.2" />
<line x1="1702.0" y1="1223.5" x2="1708.0" y2="1223.5" stroke="#05070a" stroke-width="2.2" />
<line x1="1702.0" y1="1236.0" x2="1708.0" y2="1236.0" stroke="#05070a" stroke-width="2.2" />
<line x1="1702.0" y1="1248.6" x2="1708.0" y2="1248.6" stroke="#05070a" stroke-width="2.2" />
<line x1="1702.0" y1="1261.1" x2="1708.0" y2="1261.1" stroke="#05070a" stroke-width="2.2" />
<line x1="1785.7" y1="1273.6" x2="1785.7" y2="1278.6" stroke="#05070a" stroke-width="2.2" />
<line x1="1876.3" y1="1273.6" x2="1876.3" y2="1278.6" stroke="#05070a" stroke-width="2.2" />
<line x1="1967.0" y1="1273.6" x2="1967.0" y2="1278.6" stroke="#05070a" stroke-width="2.2" />
<line x1="2061.0" y1="1273.6" x2="2061.0" y2="1278.6" stroke="#05070a" stroke-width="2.2" />
<line x1="2152.4" y1="1273.6" x2="2152.4" y2="1278.6" stroke="#05070a" stroke-width="2.2" />
<line x1="2246.0" y1="1273.6" x2="2246.0" y2="1278.6" stroke="#05070a" stroke-width="2.2" />
<text x="1662.0" y="842.8" font-size="30" fill="#121923" stroke="#121923" stroke-width="0.7" text-anchor="middle" >80</text>
<text x="1662.0" y="904.8" font-size="30" fill="#121923" stroke="#121923" stroke-width="0.7" text-anchor="middle" >75</text>
<text x="1662.0" y="967.8" font-size="30" fill="#121923" stroke="#121923" stroke-width="0.7" text-anchor="middle" >70</text>
<text x="1662.0" y="1032.3" font-size="30" fill="#121923" stroke="#121923" stroke-width="0.7" text-anchor="middle" >65</text>
<text x="1662.0" y="1095.6" font-size="30" fill="#121923" stroke="#121923" stroke-width="0.7" text-anchor="middle" >60</text>
<text x="1662.0" y="1159.7" font-size="30" fill="#121923" stroke="#121923" stroke-width="0.7" text-anchor="middle" >55</text>
<text x="1662.0" y="1221.8" font-size="30" fill="#121923" stroke="#121923" stroke-width="0.7" text-anchor="middle" >50</text>
<text x="1662.0" y="1285.8" font-size="30" fill="#121923" stroke="#121923" stroke-width="0.7" text-anchor="middle" >45</text>
<text x="1703.0" y="1323.0" font-size="30" fill="#121923" stroke="#121923" stroke-width="0.7" textLength="74.6" lengthAdjust="spacingAndGlyphs" text-anchor="start" >12:00</text>
<text x="1793.6" y="1323.0" font-size="30" fill="#121923" stroke="#121923" stroke-width="0.7" textLength="74.5" lengthAdjust="spacingAndGlyphs" text-anchor="start" >14:00</text>
<text x="1887.0" y="1323.0" font-size="30" fill="#121923" stroke="#121923" stroke-width="0.7" textLength="75.0" lengthAdjust="spacingAndGlyphs" text-anchor="start" >16:00</text>
<text x="1978.0" y="1323.0" font-size="30" fill="#121923" stroke="#121923" stroke-width="0.7" textLength="75.7" lengthAdjust="spacingAndGlyphs" text-anchor="start" >18:00</text>
<text x="2068.5" y="1323.0" font-size="30" fill="#121923" stroke="#121923" stroke-width="0.7" textLength="75.5" lengthAdjust="spacingAndGlyphs" text-anchor="start" >20:00</text>
<text x="2161.0" y="1323.0" font-size="30" fill="#121923" stroke="#121923" stroke-width="0.7" textLength="76.0" lengthAdjust="spacingAndGlyphs" text-anchor="start" >22:00</text>
<text x="1716.5" y="735.0" font-size="26" fill="#c2373c" stroke="#c2373c" stroke-width="0.45" textLength="160.0" lengthAdjust="spacingAndGlyphs" text-anchor="start" >Ceiling Tmp</text>
<text x="1912.5" y="735.0" font-size="26" fill="#9fc6e6" stroke="#9fc6e6" stroke-width="0.45" textLength="137.0" lengthAdjust="spacingAndGlyphs" text-anchor="start" >Ceiling DP</text>
<text x="1716.5" y="771.0" font-size="26" fill="#b08a5a" stroke="#b08a5a" stroke-width="0.45" textLength="140.0" lengthAdjust="spacingAndGlyphs" text-anchor="start" opacity="0.35">CWOP Tmp</text>
<text x="1912.5" y="771.0" font-size="26" fill="#5fa07a" stroke="#5fa07a" stroke-width="0.45" textLength="125.0" lengthAdjust="spacingAndGlyphs" text-anchor="start" opacity="0.3">CWOP DP</text>
<text x="1716.5" y="806.0" font-size="26" fill="#f0a540" stroke="#f0a540" stroke-width="0.45" textLength="168.5" lengthAdjust="spacingAndGlyphs" text-anchor="start" >Bad RH Tmp</text>
<text x="1912.5" y="806.0" font-size="26" fill="#35c046" stroke="#35c046" stroke-width="0.45" textLength="143.4" lengthAdjust="spacingAndGlyphs" text-anchor="start" >Bad RH DP</text>
<polyline points="1703.8,1247.1 1746.0,1245.0 1775.5,1232.3 1830.3,1211.2 1902.0,1181.7 1914.6,1190.2 1927.3,1192.3 1948.3,1202.8 1990.5,1209.1 2015.8,1213.4 2036.9,1204.9 2117.0,1202.8 2121.2,1209.1 2239.2,1211.2 2254.0,1217.6" fill="none" stroke="#2f8f55" stroke-width="2.2" stroke-linejoin="round" stroke-linecap="round" opacity="1" />
<polyline points="1703.8,1250.5 1746.0,1247.9 1830.3,1216.7 1902.0,1188.1 1927.3,1200.7 1986.3,1210.0 2053.7,1210.0 2239.2,1214.2" fill="none" stroke="#2f8050" stroke-width="2.0" stroke-linejoin="round" stroke-linecap="round" opacity="0.7" />
<polyline points="1703.8,1203.9 1707.3,1206.9 1710.9,1203.9 1714.4,1207.2 1717.9,1206.5 1721.4,1211.2 1724.9,1209.5 1729.1,1209.9 1733.3,1204.2 1737.6,1203.9 1741.1,1198.7 1744.6,1197.6 1748.1,1191.6 1751.6,1192.4 1755.1,1188.0 1758.6,1189.2 1762.1,1186.2 1765.7,1187.5 1769.2,1183.9 1772.7,1186.3 1776.2,1181.3 1779.7,1183.3 1783.4,1179.1 1787.1,1179.4 1790.8,1174.9 1794.5,1175.5 1798.2,1170.7 1801.8,1172.1 1805.5,1167.9 1809.2,1168.8 1812.7,1164.3 1816.3,1165.5 1819.8,1160.5 1823.3,1161.6 1826.8,1157.0 1830.3,1157.9 1833.8,1154.4 1837.3,1155.4 1840.8,1151.6 1844.4,1153.5 1847.9,1149.5 1851.4,1151.2 1855.6,1145.0 1859.8,1145.7 1864.0,1140.0 1868.2,1141.3 1872.5,1138.7 1876.7,1142.5 1880.9,1138.2 1885.1,1138.9 1889.3,1134.0 1893.5,1135.2 1897.8,1131.3 1902.0,1134.3 1906.2,1133.6 1910.4,1138.7 1914.6,1141.4 1918.8,1149.3 1922.5,1147.8 1926.2,1152.9 1929.9,1152.5 1933.6,1156.1 1937.3,1154.9 1941.0,1159.9 1944.7,1157.9 1948.3,1162.1 1951.7,1160.9 1955.1,1165.8 1958.5,1164.6 1961.8,1169.0 1965.2,1167.6 1969.0,1171.9 1972.8,1170.6 1976.6,1173.9 1980.4,1172.9 1984.2,1177.4 1987.7,1173.5 1991.2,1175.6 1994.7,1172.1 1998.2,1175.3 2001.7,1174.4 2005.3,1178.1 2008.8,1175.9 2012.3,1180.4 2015.8,1178.8 2019.2,1181.9 2022.5,1178.2 2025.9,1181.9 2029.3,1178.5 2032.7,1181.6 2036.0,1177.7 2039.4,1181.2 2042.8,1177.7 2046.2,1181.1 2049.5,1178.3 2053.7,1176.5 2057.1,1173.5 2060.5,1176.4 2063.9,1174.5 2067.2,1177.2 2070.6,1173.7 2074.0,1176.8 2077.4,1173.6 2080.7,1176.3 2084.1,1174.3 2087.5,1176.6 2090.8,1174.1 2094.2,1176.5 2097.6,1174.5 2101.0,1176.7 2104.3,1173.5 2107.7,1177.4 2111.1,1173.7 2114.5,1176.8 2117.8,1174.3 2121.2,1177.4 2124.8,1174.7 2128.4,1178.6 2132.0,1176.7 2135.7,1179.4 2139.3,1177.2 2142.9,1181.5 2146.5,1178.6 2150.1,1182.5 2153.7,1180.1 2157.3,1183.4 2160.9,1180.6 2164.6,1184.1 2168.2,1181.9 2171.8,1185.0 2175.2,1181.3 2178.5,1183.0 2181.9,1179.7 2185.3,1182.4 2188.7,1178.8 2192.9,1180.5 2197.1,1176.6 2201.3,1179.4 2205.5,1175.3 2209.7,1177.3 2213.9,1174.1 2218.2,1177.7 2222.4,1174.1 2226.6,1177.3 2230.8,1176.4 2235.0,1179.5 2239.2,1178.8 2241.8,1189.4 2243.5,1216.6 2249.8,1222.8 2254.0,1222.3" fill="none" stroke="#cfe6f4" stroke-width="2.7" stroke-linejoin="round" stroke-linecap="round" opacity="1" />
<polyline points="1703.8,1162.9 1707.2,1166.9 1710.6,1163.1 1713.9,1166.1 1717.3,1163.7 1720.7,1166.6 1724.1,1164.2 1727.4,1167.0 1730.8,1165.2 1734.2,1168.0 1737.6,1165.9 1741.8,1165.6 1746.0,1160.5 1750.2,1159.5 1753.9,1155.6 1757.6,1157.4 1761.3,1153.3 1765.0,1155.2 1768.6,1150.9 1772.3,1151.7 1776.0,1147.6 1779.7,1149.5 1783.4,1144.8 1787.1,1146.4 1790.8,1141.3 1794.5,1143.0 1798.2,1138.9 1801.8,1140.9 1805.5,1137.0 1809.2,1139.1 1812.7,1134.1 1816.3,1134.2 1819.8,1129.7 1823.3,1130.7 1826.8,1125.4 1830.3,1126.2 1833.8,1121.1 1837.3,1121.7 1840.8,1117.4 1844.4,1118.3 1847.9,1113.9 1851.4,1115.4 1855.6,1111.2 1859.8,1111.0 1864.0,1107.1 1868.2,1107.0 1872.5,1102.2 1876.7,1103.4 1880.9,1098.6 1885.1,1099.3 1889.3,1095.0 1893.5,1096.0 1897.8,1091.6 1902.0,1093.4 1906.2,1092.9 1910.4,1097.1 1914.6,1097.1 1918.8,1103.3 1922.5,1100.1 1926.2,1103.4 1929.9,1101.1 1933.6,1104.8 1937.3,1102.1 1941.0,1106.3 1944.7,1104.1 1948.3,1107.8 1951.7,1106.2 1955.1,1109.7 1958.5,1108.8 1961.8,1112.7 1965.2,1110.5 1969.0,1115.4 1972.8,1112.9 1976.6,1117.9 1980.4,1115.8 1984.2,1120.5 1988.4,1106.2 1992.6,1102.9 1996.8,1098.7 2001.0,1101.0 2005.3,1097.6 2009.5,1101.1 2013.7,1100.2 2020.0,1104.8 2026.3,1114.4 2030.1,1118.5 2033.9,1115.6 2037.7,1117.9 2041.5,1115.6 2045.3,1118.3 2048.7,1116.0 2052.1,1119.5 2055.4,1116.9 2058.8,1119.6 2062.2,1116.6 2066.4,1123.0 2070.6,1123.6 2074.4,1126.6 2078.2,1122.7 2082.0,1126.2 2085.8,1122.5 2089.6,1125.3 2093.4,1122.3 2097.2,1125.8 2101.0,1122.4 2104.8,1125.1 2108.5,1122.8 2112.8,1126.7 2117.0,1125.0 2121.2,1129.7 2125.4,1127.7 2129.6,1132.0 2133.8,1130.2 2138.1,1133.7 2142.3,1131.9 2146.5,1135.6 2150.7,1133.4 2154.9,1137.5 2159.1,1135.5 2162.5,1138.6 2165.9,1136.3 2169.3,1139.5 2172.6,1137.0 2176.0,1139.8 2179.4,1136.7 2182.7,1139.4 2186.1,1136.1 2189.5,1138.5 2192.9,1136.2 2199.2,1132.9 2203.1,1130.3 2206.9,1133.4 2210.8,1130.7 2214.6,1133.6 2218.5,1131.2 2222.4,1133.8 2226.2,1131.2 2230.0,1133.7 2233.8,1131.2 2237.6,1134.5 2241.3,1131.6 2244.3,1143.2 2247.7,1146.5" fill="none" stroke="#3fb94a" stroke-width="2.6" stroke-linejoin="round" stroke-linecap="round" opacity="1" />
<polyline points="1703.8,998.3 1758.6,983.6 1830.3,962.5 1868.2,945.6 1902.0,931.7 1914.6,941.4 1927.3,943.5 1969.4,963.8 2017.9,986.5 2045.3,973.1 2070.6,962.5 2095.9,954.1 2121.2,951.1" fill="none" stroke="#b4863c" stroke-width="2.5" stroke-linejoin="round" stroke-linecap="round" opacity="1" />
<polyline points="1703.8,995.0 1737.6,998.3 1758.6,986.5 1779.7,968.8 1800.8,947.8 1830.3,918.2 1851.4,898.0 1876.7,879.5 1893.5,871.9 1914.6,872.7 1920.9,893.0 1925.2,916.1 1939.9,923.3 1965.2,935.1 1986.3,944.4 2015.8,952.8 2053.7,954.5 2108.5,955.3 2180.2,955.3 2239.2,953.7 2246.8,966.7 2254.0,973.9" fill="none" stroke="#b33030" stroke-width="4.6" stroke-linejoin="round" stroke-linecap="round" opacity="0.9" />
<polyline points="1703.8,995.2 1707.2,996.3 1710.6,994.4 1713.9,996.4 1717.3,994.2 1720.7,995.5 1724.1,993.7 1727.4,995.6 1730.8,993.4 1734.2,995.2 1737.6,992.5 1741.1,993.1 1744.6,989.8 1748.1,990.5 1751.6,987.1 1755.1,988.2 1758.6,984.6 1762.1,984.5 1765.7,981.0 1769.2,982.1 1772.7,978.8 1776.2,979.2 1779.7,975.9 1783.3,976.3 1786.9,972.1 1790.6,971.7 1794.2,967.7 1797.8,968.0 1801.4,963.4 1805.0,964.3 1808.6,960.1 1812.2,959.9 1815.8,955.8 1819.5,956.7 1823.1,952.6 1826.7,952.7 1830.3,948.0 1834.2,948.0 1838.0,943.3 1841.9,942.8 1845.8,937.5 1849.6,936.9 1853.5,932.2 1857.4,931.6 1861.2,927.6 1865.1,926.6 1868.9,922.1 1872.8,921.4 1876.7,916.6 1880.9,917.1 1885.1,912.1 1889.3,913.0 1893.5,908.6 1897.8,910.0 1902.0,906.4 1906.2,909.1 1910.4,908.2 1914.6,918.9 1918.8,917.3 1923.1,919.9 1927.3,919.1 1931.0,922.9 1934.6,921.7 1938.3,925.6 1942.0,925.1 1945.7,928.3 1949.4,927.3 1953.1,931.5 1956.8,930.2 1960.5,934.0 1964.2,933.5 1967.8,937.3 1971.5,936.4 1975.2,940.2 1978.9,939.1 1982.6,942.4 1986.3,942.4 1992.6,938.3 1998.9,931.8 2002.5,933.2 2006.0,931.4 2009.5,933.4 2013.0,930.6 2016.5,932.9 2020.0,930.7 2024.2,938.1 2028.1,936.3 2032.0,938.6 2035.8,936.9 2039.7,939.7 2043.6,938.2 2047.4,940.1 2051.3,938.9 2055.1,941.2 2059.0,938.9 2062.9,941.9 2066.7,939.4 2070.6,941.9 2072.7,943.9 2076.3,946.9 2079.9,944.7 2083.5,946.5 2087.0,945.1 2090.6,947.2 2094.2,945.7 2097.8,947.4 2101.4,946.2 2105.0,948.5 2108.5,946.7 2112.8,949.9 2117.0,949.3 2121.2,952.4 2124.9,950.4 2128.6,952.8 2132.3,951.2 2136.0,953.2 2139.6,951.1 2143.3,953.6 2147.0,951.3 2150.7,953.8 2154.4,951.8 2158.1,954.3 2161.8,952.1 2165.5,954.5 2169.2,952.3 2172.8,954.2 2176.5,952.8 2180.2,955.0 2183.9,952.2 2187.6,954.7 2191.3,951.8 2195.0,954.0 2198.7,951.8 2202.4,953.8 2206.0,951.4 2209.7,953.0 2213.4,951.2 2217.1,952.8 2220.8,950.9 2224.5,952.8 2228.2,950.4 2231.9,952.8 2235.6,950.8 2239.2,952.9 2242.6,956.6 2245.6,965.6 2249.1,964.0 2252.6,966.2 2256.1,964.0" fill="none" stroke="#d4621f" stroke-width="5" stroke-linejoin="round" stroke-linecap="round" opacity="0.85" />
<polyline points="1703.8,993.5 1707.2,994.7 1710.6,992.7 1713.9,994.7 1717.3,992.5 1720.7,993.8 1724.1,992.0 1727.4,994.0 1730.8,991.7 1734.2,993.5 1737.6,990.8 1741.1,991.4 1744.6,988.1 1748.1,988.8 1751.6,985.4 1755.1,986.5 1758.6,982.9 1762.1,982.8 1765.7,979.3 1769.2,980.4 1772.7,977.2 1776.2,977.5 1779.7,974.2 1783.3,974.7 1786.9,970.4 1790.6,970.0 1794.2,966.1 1797.8,966.3 1801.4,961.8 1805.0,962.6 1808.6,958.4 1812.2,958.2 1815.8,954.1 1819.5,955.0 1823.1,951.0 1826.7,951.0 1830.3,946.4 1834.2,946.3 1838.0,941.6 1841.9,941.1 1845.8,935.8 1849.6,935.2 1853.5,930.5 1857.4,930.0 1861.2,925.9 1865.1,924.9 1868.9,920.4 1872.8,919.7 1876.7,914.9 1880.9,915.4 1885.1,910.4 1889.3,911.3 1893.5,906.9 1897.8,908.3 1902.0,904.7 1906.2,907.4 1910.4,906.5 1914.6,917.3 1918.8,915.6 1923.1,918.3 1927.3,917.4 1931.0,921.2 1934.6,920.0 1938.3,923.9 1942.0,923.4 1945.7,926.6 1949.4,925.7 1953.1,929.8 1956.8,928.5 1960.5,932.3 1964.2,931.9 1967.8,935.7 1971.5,934.7 1975.2,938.5 1978.9,937.5 1982.6,940.7 1986.3,940.7 1992.6,936.6 1998.9,930.2 2002.5,931.6 2006.0,929.7 2009.5,931.7 2013.0,928.9 2016.5,931.2 2020.0,929.0 2024.2,936.4 2028.1,934.7 2032.0,936.9 2035.8,935.2 2039.7,938.0 2043.6,936.6 2047.4,938.4 2051.3,937.2 2055.1,939.5 2059.0,937.2 2062.9,940.3 2066.7,937.7 2070.6,940.2 2072.7,942.2 2076.3,945.3 2079.9,943.0 2083.5,944.8 2087.0,943.4 2090.6,945.5 2094.2,944.0 2097.8,945.7 2101.4,944.5 2105.0,946.8 2108.5,945.0 2112.8,948.2 2117.0,947.6 2121.2,950.7 2124.9,948.7 2128.6,951.1 2132.3,949.5 2136.0,951.5 2139.6,949.4 2143.3,951.9 2147.0,949.6 2150.7,952.1 2154.4,950.1 2158.1,952.6 2161.8,950.4 2165.5,952.8 2169.2,950.6 2172.8,952.5 2176.5,951.1 2180.2,953.3 2183.9,950.5 2187.6,953.0 2191.3,950.1 2195.0,952.3 2198.7,950.1 2202.4,952.1 2206.0,949.8 2209.7,951.3 2213.4,949.5 2217.1,951.2 2220.8,949.2 2224.5,951.1 2228.2,948.8 2231.9,951.1 2235.6,949.1 2239.2,951.2 2242.6,954.9 2245.6,963.9 2249.1,962.3 2252.6,964.5 2256.1,962.4" fill="none" stroke="#ffcf70" stroke-width="2.6" stroke-linejoin="round" stroke-linecap="round" opacity="1" />
<line x1="124.5" y1="1389.0" x2="150.0" y2="1389.0" stroke="#45556a" stroke-width="3.0" />
<line x1="127.5" y1="1392.0" x2="150.0" y2="1392.0" stroke="#b9c9da" stroke-width="3.0" />
<line x1="624.0" y1="1389.0" x2="843.0" y2="1389.0" stroke="#45556a" stroke-width="3.0" />
<line x1="624.0" y1="1392.0" x2="843.0" y2="1392.0" stroke="#b9c9da" stroke-width="3.0" />
<line x1="124.5" y1="1387.5" x2="124.5" y2="2089.0" stroke="#45556a" stroke-width="3.0" />
<line x1="127.5" y1="1390.5" x2="127.5" y2="2086.0" stroke="#b9c9da" stroke-width="3.0" />
<line x1="123.0" y1="2089.0" x2="843.0" y2="2089.0" stroke="#45556a" stroke-width="3.0" />
<line x1="123.0" y1="2092.0" x2="847.5" y2="2092.0" stroke="#b9c9da" stroke-width="3.0" />
<line x1="843.0" y1="1387.5" x2="843.0" y2="2090.5" stroke="#45556a" stroke-width="3.0" />
<line x1="846.0" y1="1387.5" x2="846.0" y2="2093.5" stroke="#b9c9da" stroke-width="3.0" />
<text x="159.0" y="1407.0" font-size="37" fill="#e9f1fa" stroke="#e9f1fa" stroke-width="0.45" textLength="456.0" lengthAdjust="spacingAndGlyphs" text-anchor="start" >Temperature, Dew Point °F</text>
<rect x="226.5" y="1495.5" width="552.9" height="517.7" fill="#454c56" />
<line x1="262.5" y1="1495.5" x2="262.5" y2="2022.2" stroke="#05070a" stroke-width="3.6" />
<line x1="352.8" y1="1495.5" x2="352.8" y2="2022.2" stroke="#05070a" stroke-width="3.6" />
<line x1="444.0" y1="1495.5" x2="444.0" y2="2022.2" stroke="#05070a" stroke-width="3.6" />
<line x1="536.6" y1="1495.5" x2="536.6" y2="2022.2" stroke="#05070a" stroke-width="3.6" />
<line x1="629.2" y1="1495.5" x2="629.2" y2="2022.2" stroke="#05070a" stroke-width="3.6" />
<line x1="722.5" y1="1495.5" x2="722.5" y2="2022.2" stroke="#05070a" stroke-width="3.6" />
<line x1="219.5" y1="1559.7" x2="779.4" y2="1559.7" stroke="#05070a" stroke-width="3.6" />
<line x1="219.5" y1="1626.0" x2="779.4" y2="1626.0" stroke="#05070a" stroke-width="3.6" />
<line x1="219.5" y1="1690.4" x2="779.4" y2="1690.4" stroke="#05070a" stroke-width="3.6" />
<line x1="219.5" y1="1755.8" x2="779.4" y2="1755.8" stroke="#05070a" stroke-width="3.6" />
<line x1="219.5" y1="1819.8" x2="779.4" y2="1819.8" stroke="#05070a" stroke-width="3.6" />
<line x1="219.5" y1="1883.5" x2="779.4" y2="1883.5" stroke="#05070a" stroke-width="3.6" />
<line x1="219.5" y1="1949.7" x2="779.4" y2="1949.7" stroke="#05070a" stroke-width="3.6" />
<rect x="225.0" y="1494.3" width="554.9" height="3.1" fill="#05070a" />
<rect x="225.0" y="1494.3" width="3.0" height="520.4" fill="#05070a" />
<rect x="776.9" y="1494.3" width="3.0" height="520.4" fill="#05070a" />
<rect x="219.5" y="2011.7" width="560.4" height="3.0" fill="#05070a" />
<line x1="225.5" y1="1511.5" x2="231.5" y2="1511.5" stroke="#05070a" stroke-width="2.2" />
<line x1="225.5" y1="1527.6" x2="231.5" y2="1527.6" stroke="#05070a" stroke-width="2.2" />
<line x1="225.5" y1="1543.7" x2="231.5" y2="1543.7" stroke="#05070a" stroke-width="2.2" />
<line x1="225.5" y1="1576.3" x2="231.5" y2="1576.3" stroke="#05070a" stroke-width="2.2" />
<line x1="225.5" y1="1592.8" x2="231.5" y2="1592.8" stroke="#05070a" stroke-width="2.2" />
<line x1="225.5" y1="1609.4" x2="231.5" y2="1609.4" stroke="#05070a" stroke-width="2.2" />
<line x1="225.5" y1="1642.1" x2="231.5" y2="1642.1" stroke="#05070a" stroke-width="2.2" />
<line x1="225.5" y1="1658.2" x2="231.5" y2="1658.2" stroke="#05070a" stroke-width="2.2" />
<line x1="225.5" y1="1674.3" x2="231.5" y2="1674.3" stroke="#05070a" stroke-width="2.2" />
<line x1="225.5" y1="1706.8" x2="231.5" y2="1706.8" stroke="#05070a" stroke-width="2.2" />
<line x1="225.5" y1="1723.1" x2="231.5" y2="1723.1" stroke="#05070a" stroke-width="2.2" />
<line x1="225.5" y1="1739.5" x2="231.5" y2="1739.5" stroke="#05070a" stroke-width="2.2" />
<line x1="225.5" y1="1771.8" x2="231.5" y2="1771.8" stroke="#05070a" stroke-width="2.2" />
<line x1="225.5" y1="1787.8" x2="231.5" y2="1787.8" stroke="#05070a" stroke-width="2.2" />
<line x1="225.5" y1="1803.8" x2="231.5" y2="1803.8" stroke="#05070a" stroke-width="2.2" />
<line x1="225.5" y1="1835.7" x2="231.5" y2="1835.7" stroke="#05070a" stroke-width="2.2" />
<line x1="225.5" y1="1851.7" x2="231.5" y2="1851.7" stroke="#05070a" stroke-width="2.2" />
<line x1="225.5" y1="1867.6" x2="231.5" y2="1867.6" stroke="#05070a" stroke-width="2.2" />
<line x1="225.5" y1="1900.0" x2="231.5" y2="1900.0" stroke="#05070a" stroke-width="2.2" />
<line x1="225.5" y1="1916.6" x2="231.5" y2="1916.6" stroke="#05070a" stroke-width="2.2" />
<line x1="225.5" y1="1933.2" x2="231.5" y2="1933.2" stroke="#05070a" stroke-width="2.2" />
<line x1="225.5" y1="1965.6" x2="231.5" y2="1965.6" stroke="#05070a" stroke-width="2.2" />
<line x1="225.5" y1="1981.5" x2="231.5" y2="1981.5" stroke="#05070a" stroke-width="2.2" />
<line x1="225.5" y1="1997.3" x2="231.5" y2="1997.3" stroke="#05070a" stroke-width="2.2" />
<line x1="308.5" y1="2013.2" x2="308.5" y2="2018.2" stroke="#05070a" stroke-width="2.2" />
<line x1="398.8" y1="2013.2" x2="398.8" y2="2018.2" stroke="#05070a" stroke-width="2.2" />
<line x1="490.0" y1="2013.2" x2="490.0" y2="2018.2" stroke="#05070a" stroke-width="2.2" />
<line x1="582.6" y1="2013.2" x2="582.6" y2="2018.2" stroke="#05070a" stroke-width="2.2" />
<line x1="675.2" y1="2013.2" x2="675.2" y2="2018.2" stroke="#05070a" stroke-width="2.2" />
<line x1="768.5" y1="2013.2" x2="768.5" y2="2018.2" stroke="#05070a" stroke-width="2.2" />
<text x="184.2" y="1507.3" font-size="30" fill="#121923" stroke="#121923" stroke-width="0.7" text-anchor="middle" >68</text>
<text x="184.2" y="1570.5" font-size="30" fill="#121923" stroke="#121923" stroke-width="0.7" text-anchor="middle" >66</text>
<text x="184.2" y="1636.8" font-size="30" fill="#121923" stroke="#121923" stroke-width="0.7" text-anchor="middle" >64</text>
<text x="184.2" y="1701.2" font-size="30" fill="#121923" stroke="#121923" stroke-width="0.7" text-anchor="middle" >62</text>
<text x="184.2" y="1766.6" font-size="30" fill="#121923" stroke="#121923" stroke-width="0.7" text-anchor="middle" >60</text>
<text x="184.2" y="1830.6" font-size="30" fill="#121923" stroke="#121923" stroke-width="0.7" text-anchor="middle" >58</text>
<text x="184.2" y="1894.3" font-size="30" fill="#121923" stroke="#121923" stroke-width="0.7" text-anchor="middle" >56</text>
<text x="184.2" y="1960.5" font-size="30" fill="#121923" stroke="#121923" stroke-width="0.7" text-anchor="middle" >54</text>
<text x="184.2" y="2024.8" font-size="30" fill="#121923" stroke="#121923" stroke-width="0.7" text-anchor="middle" >52</text>
<text x="226.5" y="2060.0" font-size="30" fill="#121923" stroke="#121923" stroke-width="0.7" textLength="73.5" lengthAdjust="spacingAndGlyphs" text-anchor="start" >12:00</text>
<text x="317.0" y="2060.0" font-size="30" fill="#121923" stroke="#121923" stroke-width="0.7" textLength="74.7" lengthAdjust="spacingAndGlyphs" text-anchor="start" >14:00</text>
<text x="410.0" y="2060.0" font-size="30" fill="#121923" stroke="#121923" stroke-width="0.7" textLength="74.5" lengthAdjust="spacingAndGlyphs" text-anchor="start" >16:00</text>
<text x="500.5" y="2060.0" font-size="30" fill="#121923" stroke="#121923" stroke-width="0.7" textLength="76.0" lengthAdjust="spacingAndGlyphs" text-anchor="start" >18:00</text>
<text x="591.0" y="2060.0" font-size="30" fill="#121923" stroke="#121923" stroke-width="0.7" textLength="76.0" lengthAdjust="spacingAndGlyphs" text-anchor="start" >20:00</text>
<text x="684.0" y="2060.0" font-size="30" fill="#121923" stroke="#121923" stroke-width="0.7" textLength="76.0" lengthAdjust="spacingAndGlyphs" text-anchor="start" >22:00</text>
<text x="239.0" y="1472.4" font-size="26" fill="#c2333a" stroke="#c2333a" stroke-width="0.45" textLength="152.0" lengthAdjust="spacingAndGlyphs" text-anchor="start" >CWOP Tmp</text>
<text x="422.5" y="1472.4" font-size="26" fill="#9fc6e6" stroke="#9fc6e6" stroke-width="0.45" textLength="126.5" lengthAdjust="spacingAndGlyphs" text-anchor="start" >CWOP DP</text>
<polyline points="227.7,1752.9 231.5,1754.5 235.3,1742.7 239.1,1744.9 243.3,1731.4 247.6,1732.1 251.8,1722.0 256.0,1721.7 260.2,1707.2 264.4,1705.9 268.6,1686.8 272.8,1684.1 277.1,1664.7 281.3,1670.0 285.5,1659.7 289.7,1663.4 293.9,1651.3 298.1,1654.3 302.4,1640.4 306.6,1637.8 310.8,1621.3 315.0,1623.1 319.2,1598.1 325.5,1583.1 331.9,1538.7 336.1,1570.1 340.3,1567.7 344.5,1573.7 348.7,1535.2 355.1,1530.7 361.4,1526.8 365.6,1539.5 369.8,1504.2 374.0,1544.8 378.2,1541.7 382.5,1556.5 386.7,1521.3 390.9,1558.0 395.1,1561.1 399.3,1565.3 403.5,1533.2 407.8,1558.7 412.0,1540.2 416.2,1570.2 420.4,1562.3 424.6,1589.9 428.8,1580.4 433.1,1608.4 437.3,1595.4 441.5,1627.9 445.7,1611.4 449.9,1623.9 454.1,1584.7 458.3,1626.5 462.6,1615.7 466.8,1643.9 471.0,1644.3 475.2,1657.6 479.4,1663.2 483.6,1674.2 487.9,1678.6 492.1,1689.0 496.3,1693.6 500.5,1704.6 504.7,1708.6 508.9,1717.5 513.2,1721.4 517.4,1732.0 521.6,1735.8 525.8,1749.1 530.0,1756.5 534.2,1769.4 538.4,1777.7 542.7,1787.0 546.9,1789.7 551.1,1798.8 555.3,1802.7 559.5,1810.2 563.7,1812.7 568.0,1820.6 572.2,1822.6 576.4,1831.5 580.6,1832.3 584.8,1840.0 589.0,1841.0 593.3,1847.3 597.5,1849.1 601.7,1855.7 605.9,1858.0 610.1,1864.6 614.3,1865.9 618.5,1872.7 622.8,1875.0 627.0,1882.0 631.2,1883.1 635.4,1890.5 639.6,1890.9 643.8,1895.1 648.1,1893.5 652.3,1897.4 656.5,1895.4 660.7,1899.6 664.9,1897.6 669.1,1902.1 673.4,1899.9 677.6,1904.7 681.8,1903.4 686.0,1907.8 690.2,1906.4 694.4,1910.1 698.7,1908.3 702.9,1913.2 707.1,1911.7 711.3,1915.4 715.5,1914.6 719.7,1918.0 723.9,1916.1 728.2,1919.1 732.4,1916.5 736.6,1919.5 740.8,1917.5 745.0,1921.0 749.2,1918.5 753.2,1922.3 757.1,1920.3 761.0,1924.6 764.9,1922.9 768.8,1925.6 772.7,1923.9 776.6,1928.5" fill="none" stroke="#a92c36" stroke-width="7.5" stroke-linejoin="round" stroke-linecap="round" opacity="0.82" />
<polyline points="228.6,1858.8 234.9,1864.3 239.1,1850.3 243.3,1876.1 247.6,1852.8 251.8,1869.7 255.3,1855.6 258.8,1869.5 262.3,1852.5 268.6,1846.8 272.8,1818.0 277.1,1824.4 283.4,1859.8 287.6,1854.7 291.8,1821.4 298.1,1863.2 301.7,1841.7 305.2,1844.0 308.7,1823.1 315.0,1852.8 319.2,1811.5 323.4,1805.7 329.8,1764.9 334.0,1822.4 338.2,1827.2 342.4,1860.3 348.7,1816.4 355.1,1806.1 361.4,1810.9 365.6,1835.6 369.8,1831.2 374.0,1856.7 378.2,1844.1 384.6,1844.6 388.8,1846.7 393.0,1884.9 396.5,1857.3 400.0,1861.4 403.5,1828.8 407.8,1857.3 412.0,1844.4 416.2,1874.0 420.4,1873.1 424.6,1875.3 428.8,1853.5 433.1,1872.5 437.3,1869.3 441.5,1878.8 445.7,1860.0 449.9,1868.1 456.2,1881.7 462.6,1928.9 468.9,1870.2 472.4,1896.3 475.9,1890.3 479.4,1913.2 482.8,1898.7 486.2,1915.5 489.5,1902.0 492.9,1920.3 496.3,1908.6 499.8,1927.5 503.3,1911.9 506.8,1925.7 510.3,1908.2 513.9,1922.9 517.4,1909.1 521.6,1920.8 525.8,1921.3 530.0,1933.0 533.5,1931.1 537.0,1942.3 540.6,1939.0 544.2,1945.1 547.9,1935.3 551.6,1938.3 555.3,1929.5 559.5,1941.0 563.7,1939.1 567.3,1946.2 570.8,1939.3 574.3,1948.6 577.8,1943.5 581.3,1950.9 584.8,1945.4 588.3,1951.8 591.8,1946.9 595.4,1956.1 598.9,1950.4 602.4,1958.9 605.9,1952.7 609.3,1960.8 612.6,1957.5 616.0,1964.7 619.4,1962.3 622.8,1968.8 627.0,1960.7 631.2,1960.1 634.6,1959.2 637.9,1963.2 641.3,1962.4 644.7,1968.0 648.1,1967.3 651.7,1968.7 655.4,1965.0 659.1,1967.3 662.8,1963.1 666.5,1964.7 670.2,1961.4 673.9,1963.2 677.6,1959.3 681.1,1963.1 684.6,1961.2 688.1,1965.4 691.6,1964.1 695.1,1969.2 698.7,1967.1 702.2,1969.7 705.7,1966.3 709.2,1967.9 712.7,1964.8 716.2,1967.0 719.7,1963.2 723.3,1967.0 727.0,1964.8 730.6,1969.9 734.2,1967.3 737.8,1971.8 741.4,1970.2 745.0,1974.6 749.2,1968.6 753.5,1968.4 757.7,1963.1 761.5,1965.9 765.3,1964.0 769.1,1967.7 772.8,1964.1 776.6,1968.1" fill="none" stroke="#4f87a6" stroke-width="6" stroke-linejoin="round" stroke-linecap="round" opacity="0.55" />
<polyline points="228.6,1858.8 234.9,1864.3 239.1,1850.3 243.3,1876.1 247.6,1852.8 251.8,1869.7 255.3,1855.6 258.8,1869.5 262.3,1852.5 268.6,1846.8 272.8,1818.0 277.1,1824.4 283.4,1859.8 287.6,1854.7 291.8,1821.4 298.1,1863.2 301.7,1841.7 305.2,1844.0 308.7,1823.1 315.0,1852.8 319.2,1811.5 323.4,1805.7 329.8,1764.9 334.0,1822.4 338.2,1827.2 342.4,1860.3 348.7,1816.4 355.1,1806.1 361.4,1810.9 365.6,1835.6 369.8,1831.2 374.0,1856.7 378.2,1844.1 384.6,1844.6 388.8,1846.7 393.0,1884.9 396.5,1857.3 400.0,1861.4 403.5,1828.8 407.8,1857.3 412.0,1844.4 416.2,1874.0 420.4,1873.1 424.6,1875.3 428.8,1853.5 433.1,1872.5 437.3,1869.3 441.5,1878.8 445.7,1860.0 449.9,1868.1 456.2,1881.7 462.6,1928.9 468.9,1870.2 472.4,1896.3 475.9,1890.3 479.4,1913.2 482.8,1898.7 486.2,1915.5 489.5,1902.0 492.9,1920.3 496.3,1908.6 499.8,1927.5 503.3,1911.9 506.8,1925.7 510.3,1908.2 513.9,1922.9 517.4,1909.1 521.6,1920.8 525.8,1921.3 530.0,1933.0 533.5,1931.1 537.0,1942.3 540.6,1939.0 544.2,1945.1 547.9,1935.3 551.6,1938.3 555.3,1929.5 559.5,1941.0 563.7,1939.1 567.3,1946.2 570.8,1939.3 574.3,1948.6 577.8,1943.5 581.3,1950.9 584.8,1945.4 588.3,1951.8 591.8,1946.9 595.4,1956.1 598.9,1950.4 602.4,1958.9 605.9,1952.7 609.3,1960.8 612.6,1957.5 616.0,1964.7 619.4,1962.3 622.8,1968.8 627.0,1960.7 631.2,1960.1 634.6,1959.2 637.9,1963.2 641.3,1962.4 644.7,1968.0 648.1,1967.3 651.7,1968.7 655.4,1965.0 659.1,1967.3 662.8,1963.1 666.5,1964.7 670.2,1961.4 673.9,1963.2 677.6,1959.3 681.1,1963.1 684.6,1961.2 688.1,1965.4 691.6,1964.1 695.1,1969.2 698.7,1967.1 702.2,1969.7 705.7,1966.3 709.2,1967.9 712.7,1964.8 716.2,1967.0 719.7,1963.2 723.3,1967.0 727.0,1964.8 730.6,1969.9 734.2,1967.3 737.8,1971.8 741.4,1970.2 745.0,1974.6 749.2,1968.6 753.5,1968.4 757.7,1963.1 761.5,1965.9 765.3,1964.0 769.1,1967.7 772.8,1964.1 776.6,1968.1" fill="none" stroke="#addff3" stroke-width="3.2" stroke-linejoin="round" stroke-linecap="round" opacity="1" />
<line x1="862.6" y1="1389.0" x2="886.5" y2="1389.0" stroke="#45556a" stroke-width="3.0" />
<line x1="865.6" y1="1392.0" x2="886.5" y2="1392.0" stroke="#b9c9da" stroke-width="3.0" />
<line x1="1261.5" y1="1389.0" x2="1582.7" y2="1389.0" stroke="#45556a" stroke-width="3.0" />
<line x1="1261.5" y1="1392.0" x2="1582.7" y2="1392.0" stroke="#b9c9da" stroke-width="3.0" />
<line x1="862.6" y1="1387.5" x2="862.6" y2="2089.0" stroke="#45556a" stroke-width="3.0" />
<line x1="865.6" y1="1390.5" x2="865.6" y2="2086.0" stroke="#b9c9da" stroke-width="3.0" />
<line x1="861.1" y1="2089.0" x2="1582.7" y2="2089.0" stroke="#45556a" stroke-width="3.0" />
<line x1="861.1" y1="2092.0" x2="1587.2" y2="2092.0" stroke="#b9c9da" stroke-width="3.0" />
<line x1="1582.7" y1="1387.5" x2="1582.7" y2="2090.5" stroke="#45556a" stroke-width="3.0" />
<line x1="1585.7" y1="1387.5" x2="1585.7" y2="2093.5" stroke="#b9c9da" stroke-width="3.0" />
<text x="895.5" y="1407.0" font-size="37" fill="#e9f1fa" stroke="#e9f1fa" stroke-width="0.45" textLength="357.0" lengthAdjust="spacingAndGlyphs" text-anchor="start" >QNH Barometer  inHg</text>
<rect x="1009.4" y="1441.7" width="510.1" height="571.3" fill="#454c56" />
<rect x="1009.4" y="1441.7" width="31.2" height="571.3" fill="#8b95a3" opacity="0.2"/>
<line x1="1040.6" y1="1441.7" x2="1040.6" y2="2022.0" stroke="#05070a" stroke-width="3.6" />
<line x1="1124.9" y1="1441.7" x2="1124.9" y2="2022.0" stroke="#05070a" stroke-width="3.6" />
<line x1="1209.6" y1="1441.7" x2="1209.6" y2="2022.0" stroke="#05070a" stroke-width="3.6" />
<line x1="1294.8" y1="1441.7" x2="1294.8" y2="2022.0" stroke="#05070a" stroke-width="3.6" />
<line x1="1380.0" y1="1441.7" x2="1380.0" y2="2022.0" stroke="#05070a" stroke-width="3.6" />
<line x1="1463.8" y1="1441.7" x2="1463.8" y2="2022.0" stroke="#05070a" stroke-width="3.6" />
<line x1="1002.4" y1="1490.2" x2="1519.5" y2="1490.2" stroke="#05070a" stroke-width="3.6" />
<line x1="1002.4" y1="1547.0" x2="1519.5" y2="1547.0" stroke="#05070a" stroke-width="3.6" />
<line x1="1002.4" y1="1604.0" x2="1519.5" y2="1604.0" stroke="#05070a" stroke-width="3.6" />
<line x1="1002.4" y1="1661.7" x2="1519.5" y2="1661.7" stroke="#05070a" stroke-width="3.6" />
<line x1="1002.4" y1="1719.0" x2="1519.5" y2="1719.0" stroke="#05070a" stroke-width="3.6" />
<line x1="1002.4" y1="1774.7" x2="1519.5" y2="1774.7" stroke="#05070a" stroke-width="3.6" />
<line x1="1002.4" y1="1831.6" x2="1519.5" y2="1831.6" stroke="#05070a" stroke-width="3.6" />
<line x1="1002.4" y1="1889.4" x2="1519.5" y2="1889.4" stroke="#05070a" stroke-width="3.6" />
<line x1="1002.4" y1="1946.3" x2="1519.5" y2="1946.3" stroke="#05070a" stroke-width="3.6" />
<line x1="1002.4" y1="2003.2" x2="1519.5" y2="2003.2" stroke="#05070a" stroke-width="3.6" />
<rect x="1007.9" y="1440.5" width="512.1" height="3.1" fill="#05070a" />
<rect x="1007.9" y="1440.5" width="3.0" height="574.0" fill="#05070a" />
<rect x="1517.0" y="1440.5" width="3.0" height="574.0" fill="#05070a" />
<rect x="1002.4" y="2011.5" width="517.6" height="3.0" fill="#05070a" />
<line x1="1008.4" y1="1451.4" x2="1014.4" y2="1451.4" stroke="#05070a" stroke-width="2.2" />
<line x1="1008.4" y1="1461.1" x2="1014.4" y2="1461.1" stroke="#05070a" stroke-width="2.2" />
<line x1="1008.4" y1="1470.8" x2="1014.4" y2="1470.8" stroke="#05070a" stroke-width="2.2" />
<line x1="1008.4" y1="1480.5" x2="1014.4" y2="1480.5" stroke="#05070a" stroke-width="2.2" />
<line x1="1008.4" y1="1501.6" x2="1014.4" y2="1501.6" stroke="#05070a" stroke-width="2.2" />
<line x1="1008.4" y1="1512.9" x2="1014.4" y2="1512.9" stroke="#05070a" stroke-width="2.2" />
<line x1="1008.4" y1="1524.3" x2="1014.4" y2="1524.3" stroke="#05070a" stroke-width="2.2" />
<line x1="1008.4" y1="1535.6" x2="1014.4" y2="1535.6" stroke="#05070a" stroke-width="2.2" />
<line x1="1008.4" y1="1558.4" x2="1014.4" y2="1558.4" stroke="#05070a" stroke-width="2.2" />
<line x1="1008.4" y1="1569.8" x2="1014.4" y2="1569.8" stroke="#05070a" stroke-width="2.2" />
<line x1="1008.4" y1="1581.2" x2="1014.4" y2="1581.2" stroke="#05070a" stroke-width="2.2" />
<line x1="1008.4" y1="1592.6" x2="1014.4" y2="1592.6" stroke="#05070a" stroke-width="2.2" />
<line x1="1008.4" y1="1615.5" x2="1014.4" y2="1615.5" stroke="#05070a" stroke-width="2.2" />
<line x1="1008.4" y1="1627.1" x2="1014.4" y2="1627.1" stroke="#05070a" stroke-width="2.2" />
<line x1="1008.4" y1="1638.6" x2="1014.4" y2="1638.6" stroke="#05070a" stroke-width="2.2" />
<line x1="1008.4" y1="1650.2" x2="1014.4" y2="1650.2" stroke="#05070a" stroke-width="2.2" />
<line x1="1008.4" y1="1673.2" x2="1014.4" y2="1673.2" stroke="#05070a" stroke-width="2.2" />
<line x1="1008.4" y1="1684.6" x2="1014.4" y2="1684.6" stroke="#05070a" stroke-width="2.2" />
<line x1="1008.4" y1="1696.1" x2="1014.4" y2="1696.1" stroke="#05070a" stroke-width="2.2" />
<line x1="1008.4" y1="1707.5" x2="1014.4" y2="1707.5" stroke="#05070a" stroke-width="2.2" />
<line x1="1008.4" y1="1730.1" x2="1014.4" y2="1730.1" stroke="#05070a" stroke-width="2.2" />
<line x1="1008.4" y1="1741.3" x2="1014.4" y2="1741.3" stroke="#05070a" stroke-width="2.2" />
<line x1="1008.4" y1="1752.4" x2="1014.4" y2="1752.4" stroke="#05070a" stroke-width="2.2" />
<line x1="1008.4" y1="1763.6" x2="1014.4" y2="1763.6" stroke="#05070a" stroke-width="2.2" />
<line x1="1008.4" y1="1786.1" x2="1014.4" y2="1786.1" stroke="#05070a" stroke-width="2.2" />
<line x1="1008.4" y1="1797.5" x2="1014.4" y2="1797.5" stroke="#05070a" stroke-width="2.2" />
<line x1="1008.4" y1="1808.8" x2="1014.4" y2="1808.8" stroke="#05070a" stroke-width="2.2" />
<line x1="1008.4" y1="1820.2" x2="1014.4" y2="1820.2" stroke="#05070a" stroke-width="2.2" />
<line x1="1008.4" y1="1843.2" x2="1014.4" y2="1843.2" stroke="#05070a" stroke-width="2.2" />
<line x1="1008.4" y1="1854.7" x2="1014.4" y2="1854.7" stroke="#05070a" stroke-width="2.2" />
<line x1="1008.4" y1="1866.3" x2="1014.4" y2="1866.3" stroke="#05070a" stroke-width="2.2" />
<line x1="1008.4" y1="1877.8" x2="1014.4" y2="1877.8" stroke="#05070a" stroke-width="2.2" />
<line x1="1008.4" y1="1900.8" x2="1014.4" y2="1900.8" stroke="#05070a" stroke-width="2.2" />
<line x1="1008.4" y1="1912.2" x2="1014.4" y2="1912.2" stroke="#05070a" stroke-width="2.2" />
<line x1="1008.4" y1="1923.5" x2="1014.4" y2="1923.5" stroke="#05070a" stroke-width="2.2" />
<line x1="1008.4" y1="1934.9" x2="1014.4" y2="1934.9" stroke="#05070a" stroke-width="2.2" />
<line x1="1008.4" y1="1957.7" x2="1014.4" y2="1957.7" stroke="#05070a" stroke-width="2.2" />
<line x1="1008.4" y1="1969.1" x2="1014.4" y2="1969.1" stroke="#05070a" stroke-width="2.2" />
<line x1="1008.4" y1="1980.4" x2="1014.4" y2="1980.4" stroke="#05070a" stroke-width="2.2" />
<line x1="1008.4" y1="1991.8" x2="1014.4" y2="1991.8" stroke="#05070a" stroke-width="2.2" />
<line x1="1082.6" y1="2013.0" x2="1082.6" y2="2018.0" stroke="#05070a" stroke-width="2.2" />
<line x1="1166.9" y1="2013.0" x2="1166.9" y2="2018.0" stroke="#05070a" stroke-width="2.2" />
<line x1="1251.6" y1="2013.0" x2="1251.6" y2="2018.0" stroke="#05070a" stroke-width="2.2" />
<line x1="1336.8" y1="2013.0" x2="1336.8" y2="2018.0" stroke="#05070a" stroke-width="2.2" />
<line x1="1422.0" y1="2013.0" x2="1422.0" y2="2018.0" stroke="#05070a" stroke-width="2.2" />
<line x1="1505.8" y1="2013.0" x2="1505.8" y2="2018.0" stroke="#05070a" stroke-width="2.2" />
<text x="947.0" y="1499.0" font-size="30" fill="#121923" stroke="#121923" stroke-width="0.7" text-anchor="middle" >29.91</text>
<text x="947.0" y="1555.8" font-size="30" fill="#121923" stroke="#121923" stroke-width="0.7" text-anchor="middle" >29.90</text>
<text x="947.0" y="1612.8" font-size="30" fill="#121923" stroke="#121923" stroke-width="0.7" text-anchor="middle" >29.89</text>
<text x="947.0" y="1670.5" font-size="30" fill="#121923" stroke="#121923" stroke-width="0.7" text-anchor="middle" >29.88</text>
<text x="947.0" y="1727.8" font-size="30" fill="#121923" stroke="#121923" stroke-width="0.7" text-anchor="middle" >29.87</text>
<text x="947.0" y="1783.5" font-size="30" fill="#121923" stroke="#121923" stroke-width="0.7" text-anchor="middle" >29.86</text>
<text x="947.0" y="1840.4" font-size="30" fill="#121923" stroke="#121923" stroke-width="0.7" text-anchor="middle" >29.85</text>
<text x="947.0" y="1898.2" font-size="30" fill="#121923" stroke="#121923" stroke-width="0.7" text-anchor="middle" >29.84</text>
<text x="947.0" y="1955.1" font-size="30" fill="#121923" stroke="#121923" stroke-width="0.7" text-anchor="middle" >29.83</text>
<text x="947.0" y="2012.0" font-size="30" fill="#121923" stroke="#121923" stroke-width="0.7" text-anchor="middle" >29.82</text>
<text x="1004.0" y="2060.0" font-size="30" fill="#121923" stroke="#121923" stroke-width="0.7" textLength="74.0" lengthAdjust="spacingAndGlyphs" text-anchor="start" >12:00</text>
<text x="1172.5" y="2060.0" font-size="30" fill="#121923" stroke="#121923" stroke-width="0.7" textLength="76.0" lengthAdjust="spacingAndGlyphs" text-anchor="start" >16:00</text>
<text x="1339.0" y="2060.0" font-size="30" fill="#121923" stroke="#121923" stroke-width="0.7" textLength="78.0" lengthAdjust="spacingAndGlyphs" text-anchor="start" >20:00</text>
<polyline points="1012.3,1911.8 1018.6,1908.3 1025.0,1892.0 1031.3,1885.5 1035.5,1867.7 1039.7,1861.0 1043.9,1855.2 1048.1,1856.8 1054.5,1849.7 1060.8,1850.2 1065.0,1842.8 1069.2,1844.1 1073.4,1838.0 1077.7,1840.3 1084.0,1832.6 1090.3,1834.4 1096.6,1823.8 1103.0,1823.1 1108.0,1815.1 1113.5,1815.9 1119.0,1817.9 1124.0,1830.6 1130.4,1807.4 1136.7,1798.8 1140.9,1795.7 1145.1,1803.1 1149.3,1791.7 1153.5,1790.6 1157.8,1792.5 1162.0,1803.1 1168.3,1791.1 1174.6,1791.8 1180.9,1785.1 1187.3,1785.5 1193.6,1770.5 1199.9,1765.9 1204.1,1754.7 1208.3,1756.8 1214.7,1753.5 1221.0,1760.8 1223.1,1746.8 1225.2,1744.0 1231.5,1743.5 1237.9,1750.2 1244.2,1742.8 1250.5,1742.8 1255.6,1726.5 1261.0,1718.3 1264.0,1707.4 1267.4,1705.5 1270.7,1713.0 1273.7,1730.6 1276.6,1718.2 1280.0,1714.0 1286.3,1711.6 1292.7,1717.7 1296.9,1707.5 1301.1,1705.3 1307.4,1697.2 1313.7,1697.4 1320.1,1689.1 1326.4,1692.7 1332.7,1695.0 1339.0,1708.6 1343.3,1700.9 1347.5,1701.4 1351.7,1694.0 1355.9,1697.8 1362.2,1681.3 1368.5,1675.3 1374.9,1667.0 1381.2,1668.4 1385.4,1664.3 1389.6,1672.5 1396.0,1661.1 1402.3,1659.9 1408.6,1639.7 1414.9,1630.1 1421.2,1617.8 1427.6,1618.0 1433.9,1610.1 1440.2,1613.3 1446.5,1599.1 1452.9,1596.2 1457.9,1588.7 1463.4,1591.9 1468.9,1572.3 1473.9,1559.7 1478.2,1551.3 1482.4,1545.0 1486.6,1542.0 1490.8,1540.7 1494.2,1547.1 1497.1,1553.4 1501.3,1553.8 1505.6,1553.4 1506.8,1580.8 1508.5,1614.5 1509.8,1648.2 1511.0,1682.0 1514.0,1683.7 1516.1,1684.1" fill="none" stroke="#1f8fc4" stroke-width="6" stroke-linejoin="round" stroke-linecap="round" opacity="0.75" />
<polyline points="1012.3,1911.8 1018.6,1908.3 1025.0,1892.0 1031.3,1885.5 1035.5,1867.7 1039.7,1861.0 1043.9,1855.2 1048.1,1856.8 1054.5,1849.7 1060.8,1850.2 1065.0,1842.8 1069.2,1844.1 1073.4,1838.0 1077.7,1840.3 1084.0,1832.6 1090.3,1834.4 1096.6,1823.8 1103.0,1823.1 1108.0,1815.1 1113.5,1815.9 1119.0,1817.9 1124.0,1830.6 1130.4,1807.4 1136.7,1798.8 1140.9,1795.7 1145.1,1803.1 1149.3,1791.7 1153.5,1790.6 1157.8,1792.5 1162.0,1803.1 1168.3,1791.1 1174.6,1791.8 1180.9,1785.1 1187.3,1785.5 1193.6,1770.5 1199.9,1765.9 1204.1,1754.7 1208.3,1756.8 1214.7,1753.5 1221.0,1760.8 1223.1,1746.8 1225.2,1744.0 1231.5,1743.5 1237.9,1750.2 1244.2,1742.8 1250.5,1742.8 1255.6,1726.5 1261.0,1718.3 1264.0,1707.4 1267.4,1705.5 1270.7,1713.0 1273.7,1730.6 1276.6,1718.2 1280.0,1714.0 1286.3,1711.6 1292.7,1717.7 1296.9,1707.5 1301.1,1705.3 1307.4,1697.2 1313.7,1697.4 1320.1,1689.1 1326.4,1692.7 1332.7,1695.0 1339.0,1708.6 1343.3,1700.9 1347.5,1701.4 1351.7,1694.0 1355.9,1697.8 1362.2,1681.3 1368.5,1675.3 1374.9,1667.0 1381.2,1668.4 1385.4,1664.3 1389.6,1672.5 1396.0,1661.1 1402.3,1659.9 1408.6,1639.7 1414.9,1630.1 1421.2,1617.8 1427.6,1618.0 1433.9,1610.1 1440.2,1613.3 1446.5,1599.1 1452.9,1596.2 1457.9,1588.7 1463.4,1591.9 1468.9,1572.3 1473.9,1559.7 1478.2,1551.3 1482.4,1545.0 1486.6,1542.0 1490.8,1540.7 1494.2,1547.1 1497.1,1553.4 1501.3,1553.8 1505.6,1553.4 1506.8,1580.8 1508.5,1614.5 1509.8,1648.2 1511.0,1682.0 1514.0,1683.7 1516.1,1684.1" fill="none" stroke="#4accf0" stroke-width="2.8" stroke-linejoin="round" stroke-linecap="round" opacity="1" />
<line x1="1601.8" y1="1389.0" x2="1625.0" y2="1389.0" stroke="#45556a" stroke-width="3.0" />
<line x1="1604.8" y1="1392.0" x2="1625.0" y2="1392.0" stroke="#b9c9da" stroke-width="3.0" />
<line x1="1915.0" y1="1389.0" x2="2320.4" y2="1389.0" stroke="#45556a" stroke-width="3.0" />
<line x1="1915.0" y1="1392.0" x2="2320.4" y2="1392.0" stroke="#b9c9da" stroke-width="3.0" />
<line x1="1601.8" y1="1387.5" x2="1601.8" y2="2089.0" stroke="#45556a" stroke-width="3.0" />
<line x1="1604.8" y1="1390.5" x2="1604.8" y2="2086.0" stroke="#b9c9da" stroke-width="3.0" />
<line x1="1600.3" y1="2089.0" x2="2320.4" y2="2089.0" stroke="#45556a" stroke-width="3.0" />
<line x1="1600.3" y1="2092.0" x2="2324.9" y2="2092.0" stroke="#b9c9da" stroke-width="3.0" />
<line x1="2320.4" y1="1387.5" x2="2320.4" y2="2090.5" stroke="#45556a" stroke-width="3.0" />
<line x1="2323.4" y1="1387.5" x2="2323.4" y2="2093.5" stroke="#b9c9da" stroke-width="3.0" />
<text x="1634.0" y="1407.0" font-size="37" fill="#e9f1fa" stroke="#e9f1fa" stroke-width="0.45" textLength="272.0" lengthAdjust="spacingAndGlyphs" text-anchor="start" >Anemometer  KT</text>
<rect x="1703.0" y="1567.3" width="511.8" height="445.7" fill="#454c56" />
<line x1="1736.7" y1="1567.3" x2="1736.7" y2="2022.0" stroke="#05070a" stroke-width="3.6" />
<line x1="1821.0" y1="1567.3" x2="1821.0" y2="2022.0" stroke="#05070a" stroke-width="3.6" />
<line x1="1906.0" y1="1567.3" x2="1906.0" y2="2022.0" stroke="#05070a" stroke-width="3.6" />
<line x1="1990.5" y1="1567.3" x2="1990.5" y2="2022.0" stroke="#05070a" stroke-width="3.6" />
<line x1="2075.7" y1="1567.3" x2="2075.7" y2="2022.0" stroke="#05070a" stroke-width="3.6" />
<line x1="2160.0" y1="1567.3" x2="2160.0" y2="2022.0" stroke="#05070a" stroke-width="3.6" />
<line x1="1696.0" y1="1642.0" x2="2214.8" y2="1642.0" stroke="#05070a" stroke-width="3.6" />
<line x1="1696.0" y1="1716.5" x2="2214.8" y2="1716.5" stroke="#05070a" stroke-width="3.6" />
<line x1="1696.0" y1="1791.6" x2="2214.8" y2="1791.6" stroke="#05070a" stroke-width="3.6" />
<line x1="1696.0" y1="1864.0" x2="2214.8" y2="1864.0" stroke="#05070a" stroke-width="3.6" />
<line x1="1696.0" y1="1939.0" x2="2214.8" y2="1939.0" stroke="#05070a" stroke-width="3.6" />
<rect x="1701.5" y="1566.1" width="513.8" height="3.1" fill="#05070a" />
<rect x="1701.5" y="1566.1" width="3.0" height="448.4" fill="#05070a" />
<rect x="2212.3" y="1566.1" width="3.0" height="448.4" fill="#05070a" />
<rect x="1696.0" y="2011.5" width="519.3" height="3.0" fill="#05070a" />
<line x1="1702.0" y1="1586.0" x2="1708.0" y2="1586.0" stroke="#05070a" stroke-width="2.2" />
<line x1="1702.0" y1="1604.7" x2="1708.0" y2="1604.7" stroke="#05070a" stroke-width="2.2" />
<line x1="1702.0" y1="1623.3" x2="1708.0" y2="1623.3" stroke="#05070a" stroke-width="2.2" />
<line x1="1702.0" y1="1660.6" x2="1708.0" y2="1660.6" stroke="#05070a" stroke-width="2.2" />
<line x1="1702.0" y1="1679.2" x2="1708.0" y2="1679.2" stroke="#05070a" stroke-width="2.2" />
<line x1="1702.0" y1="1697.9" x2="1708.0" y2="1697.9" stroke="#05070a" stroke-width="2.2" />
<line x1="1702.0" y1="1735.3" x2="1708.0" y2="1735.3" stroke="#05070a" stroke-width="2.2" />
<line x1="1702.0" y1="1754.0" x2="1708.0" y2="1754.0" stroke="#05070a" stroke-width="2.2" />
<line x1="1702.0" y1="1772.8" x2="1708.0" y2="1772.8" stroke="#05070a" stroke-width="2.2" />
<line x1="1702.0" y1="1809.7" x2="1708.0" y2="1809.7" stroke="#05070a" stroke-width="2.2" />
<line x1="1702.0" y1="1827.8" x2="1708.0" y2="1827.8" stroke="#05070a" stroke-width="2.2" />
<line x1="1702.0" y1="1845.9" x2="1708.0" y2="1845.9" stroke="#05070a" stroke-width="2.2" />
<line x1="1702.0" y1="1882.8" x2="1708.0" y2="1882.8" stroke="#05070a" stroke-width="2.2" />
<line x1="1702.0" y1="1901.5" x2="1708.0" y2="1901.5" stroke="#05070a" stroke-width="2.2" />
<line x1="1702.0" y1="1920.2" x2="1708.0" y2="1920.2" stroke="#05070a" stroke-width="2.2" />
<line x1="1702.0" y1="1957.5" x2="1708.0" y2="1957.5" stroke="#05070a" stroke-width="2.2" />
<line x1="1702.0" y1="1976.0" x2="1708.0" y2="1976.0" stroke="#05070a" stroke-width="2.2" />
<line x1="1702.0" y1="1994.5" x2="1708.0" y2="1994.5" stroke="#05070a" stroke-width="2.2" />
<line x1="1778.7" y1="2013.0" x2="1778.7" y2="2018.0" stroke="#05070a" stroke-width="2.2" />
<line x1="1863.0" y1="2013.0" x2="1863.0" y2="2018.0" stroke="#05070a" stroke-width="2.2" />
<line x1="1948.0" y1="2013.0" x2="1948.0" y2="2018.0" stroke="#05070a" stroke-width="2.2" />
<line x1="2032.5" y1="2013.0" x2="2032.5" y2="2018.0" stroke="#05070a" stroke-width="2.2" />
<line x1="2117.7" y1="2013.0" x2="2117.7" y2="2018.0" stroke="#05070a" stroke-width="2.2" />
<line x1="2202.0" y1="2013.0" x2="2202.0" y2="2018.0" stroke="#05070a" stroke-width="2.2" />
<line x1="2221.0" y1="1567.3" x2="2221.0" y2="2013.0" stroke="#05070a" stroke-width="3.5" />
<line x1="2221.0" y1="1567.3" x2="2231.0" y2="1567.3" stroke="#05070a" stroke-width="2.5" />
<line x1="2221.0" y1="1642.0" x2="2231.0" y2="1642.0" stroke="#05070a" stroke-width="2.5" />
<line x1="2221.0" y1="1716.5" x2="2231.0" y2="1716.5" stroke="#05070a" stroke-width="2.5" />
<line x1="2221.0" y1="1791.6" x2="2231.0" y2="1791.6" stroke="#05070a" stroke-width="2.5" />
<line x1="2221.0" y1="1864.0" x2="2231.0" y2="1864.0" stroke="#05070a" stroke-width="2.5" />
<line x1="2221.0" y1="1939.0" x2="2231.0" y2="1939.0" stroke="#05070a" stroke-width="2.5" />
<line x1="2221.0" y1="2013.0" x2="2231.0" y2="2013.0" stroke="#05070a" stroke-width="2.5" />
<line x1="2221.0" y1="1604.7" x2="2229.0" y2="1604.7" stroke="#05070a" stroke-width="2" />
<line x1="2221.0" y1="1679.2" x2="2229.0" y2="1679.2" stroke="#05070a" stroke-width="2" />
<line x1="2221.0" y1="1754.0" x2="2229.0" y2="1754.0" stroke="#05070a" stroke-width="2" />
<line x1="2221.0" y1="1827.8" x2="2229.0" y2="1827.8" stroke="#05070a" stroke-width="2" />
<line x1="2221.0" y1="1901.5" x2="2229.0" y2="1901.5" stroke="#05070a" stroke-width="2" />
<line x1="2221.0" y1="1976.0" x2="2229.0" y2="1976.0" stroke="#05070a" stroke-width="2" />
<text x="1660.7" y="1579.3" font-size="30" fill="#121923" stroke="#121923" stroke-width="0.7" text-anchor="middle" >12</text>
<text x="1660.7" y="1652.8" font-size="30" fill="#121923" stroke="#121923" stroke-width="0.7" text-anchor="middle" >10</text>
<text x="1660.7" y="1727.3" font-size="30" fill="#121923" stroke="#121923" stroke-width="0.7" text-anchor="middle" >8</text>
<text x="1660.7" y="1802.4" font-size="30" fill="#121923" stroke="#121923" stroke-width="0.7" text-anchor="middle" >6</text>
<text x="1660.7" y="1874.8" font-size="30" fill="#121923" stroke="#121923" stroke-width="0.7" text-anchor="middle" >4</text>
<text x="1660.7" y="1949.8" font-size="30" fill="#121923" stroke="#121923" stroke-width="0.7" text-anchor="middle" >2</text>
<text x="1660.7" y="2024.8" font-size="30" fill="#121923" stroke="#121923" stroke-width="0.7" text-anchor="middle" >0</text>
<text x="2266.5" y="1579.0" font-size="30" fill="#121923" stroke="#121923" stroke-width="0.7" text-anchor="middle" >N</text>
<text x="2266.5" y="1652.5" font-size="30" fill="#121923" stroke="#121923" stroke-width="0.7" text-anchor="middle" >300</text>
<text x="2266.5" y="1727.0" font-size="30" fill="#121923" stroke="#121923" stroke-width="0.7" text-anchor="middle" >240</text>
<text x="2266.5" y="1802.1" font-size="30" fill="#121923" stroke="#121923" stroke-width="0.7" text-anchor="middle" >S</text>
<text x="2266.5" y="1874.5" font-size="30" fill="#121923" stroke="#121923" stroke-width="0.7" text-anchor="middle" >120</text>
<text x="2266.5" y="1949.5" font-size="30" fill="#121923" stroke="#121923" stroke-width="0.7" text-anchor="middle" >60</text>
<text x="2266.5" y="2024.5" font-size="30" fill="#121923" stroke="#121923" stroke-width="0.7" text-anchor="middle" >N</text>
<text x="1697.5" y="2060.0" font-size="30" fill="#121923" stroke="#121923" stroke-width="0.7" textLength="76.0" lengthAdjust="spacingAndGlyphs" text-anchor="start" >12:00</text>
<text x="1869.0" y="2060.0" font-size="30" fill="#121923" stroke="#121923" stroke-width="0.7" textLength="75.0" lengthAdjust="spacingAndGlyphs" text-anchor="start" >16:00</text>
<text x="2036.0" y="2060.0" font-size="30" fill="#121923" stroke="#121923" stroke-width="0.7" textLength="77.0" lengthAdjust="spacingAndGlyphs" text-anchor="start" >20:00</text>
<text x="1716.5" y="1473.0" font-size="26" fill="#3a98d8" stroke="#3a98d8" stroke-width="0.45" textLength="373.0" lengthAdjust="spacingAndGlyphs" text-anchor="start" >10-minute Peak Gust Speed</text>
<text x="1716.5" y="1506.0" font-size="26" fill="#cfe2f0" stroke="#cfe2f0" stroke-width="0.45" textLength="193.5" lengthAdjust="spacingAndGlyphs" text-anchor="start" >Average Speed</text>
<text x="1781.8" y="1545.0" font-size="26" fill="#c2333f" stroke="#c2333f" stroke-width="0.45" textLength="122.0" lengthAdjust="spacingAndGlyphs" text-anchor="start" >Direction</text>
<polyline points="1703.8,1741.0 1712.3,1764.2 1733.3,1774.7 1750.2,1781.0" fill="none" stroke="#b8303a" stroke-width="7" stroke-linejoin="round" stroke-linecap="round" opacity="0.8" />
<polyline points="1752.3,1595.5 1752.3,1977.1" fill="none" stroke="#b42a38" stroke-width="7" stroke-linejoin="round" stroke-linecap="round" opacity="0.9" />
<polyline points="1781.8,1571.5 1781.8,1977.1" fill="none" stroke="#b42a38" stroke-width="7" stroke-linejoin="round" stroke-linecap="round" opacity="0.9" />
<polyline points="1897.3,1595.5 1897.3,1980.0" fill="none" stroke="#b42a38" stroke-width="7" stroke-linejoin="round" stroke-linecap="round" opacity="0.9" />
<polyline points="1796.6,1703.1 1809.2,1707.3 1826.1,1700.9 1843.0,1707.3 1885.1,1709.4 1910.4,1707.3 1935.7,1703.1 1961.0,1698.0 1977.9,1705.2 2011.6,1707.3 2053.7,1707.3 2095.9,1705.2 2138.1,1706.4 2180.2,1706.4 2214.8,1706.4" fill="none" stroke="#a62d38" stroke-width="7" stroke-linejoin="round" stroke-linecap="round" opacity="0.92" />
<polyline points="1703.8,1854.8 1710.2,1800.0 1716.5,1800.0 1724.9,1867.5 1731.2,1901.2 1739.7,1838.0 1746.0,1838.0 1754.4,1863.3 1760.7,1882.2 1767.1,1781.0 1773.4,1781.0 1779.7,1829.5 1788.1,1846.4 1794.5,1871.7 1800.8,1816.9 1807.1,1774.7 1815.5,1774.7 1821.9,1791.6 1832.4,1812.7 1838.7,1831.6 1843.0,1804.2 1851.4,1808.4 1864.0,1821.1 1876.7,1823.2 1883.0,1795.8 1887.2,1732.6 1891.4,1732.6 1895.6,1774.7 1902.0,1808.4 1908.3,1804.2 1911.2,1778.9 1916.7,1781.0 1923.1,1795.8 1931.5,1812.7 1937.8,1829.5 1948.3,1816.9 1956.8,1812.7 1967.3,1800.0 1971.5,1823.2 1974.5,1778.9 1978.7,1778.9 1984.2,1816.9 1994.7,1816.9 2005.3,1833.7 2011.6,1865.4 2015.8,1819.0 2022.1,1819.0 2028.4,1861.1 2039.0,1863.3 2049.5,1875.9 2058.0,1882.2 2066.4,1875.9 2076.9,1897.0 2087.5,1909.6 2104.3,1916.0 2125.4,1918.1 2142.3,1920.2 2159.1,1932.8 2167.6,1934.9 2184.4,1909.6 2197.1,1930.7 2209.7,1932.8 2213.9,1939.1" fill="none" stroke="#1f86b8" stroke-width="6" stroke-linejoin="round" stroke-linecap="round" opacity="0.8" />
<polyline points="1703.8,1854.8 1710.2,1800.0 1716.5,1800.0 1724.9,1867.5 1731.2,1901.2 1739.7,1838.0 1746.0,1838.0 1754.4,1863.3 1760.7,1882.2 1767.1,1781.0 1773.4,1781.0 1779.7,1829.5 1788.1,1846.4 1794.5,1871.7 1800.8,1816.9 1807.1,1774.7 1815.5,1774.7 1821.9,1791.6 1832.4,1812.7 1838.7,1831.6 1843.0,1804.2 1851.4,1808.4 1864.0,1821.1 1876.7,1823.2 1883.0,1795.8 1887.2,1732.6 1891.4,1732.6 1895.6,1774.7 1902.0,1808.4 1908.3,1804.2 1911.2,1778.9 1916.7,1781.0 1923.1,1795.8 1931.5,1812.7 1937.8,1829.5 1948.3,1816.9 1956.8,1812.7 1967.3,1800.0 1971.5,1823.2 1974.5,1778.9 1978.7,1778.9 1984.2,1816.9 1994.7,1816.9 2005.3,1833.7 2011.6,1865.4 2015.8,1819.0 2022.1,1819.0 2028.4,1861.1 2039.0,1863.3 2049.5,1875.9 2058.0,1882.2 2066.4,1875.9 2076.9,1897.0 2087.5,1909.6 2104.3,1916.0 2125.4,1918.1 2142.3,1920.2 2159.1,1932.8 2167.6,1934.9 2184.4,1909.6 2197.1,1930.7 2209.7,1932.8 2213.9,1939.1" fill="none" stroke="#4cc8ea" stroke-width="2.8" stroke-linejoin="round" stroke-linecap="round" opacity="1" />
<polyline points="1705.9,1943.4 1716.5,1968.7 1727.0,1977.1 1737.6,1956.0 1750.2,1941.2 1758.6,1960.2 1771.3,1972.9 1781.8,1966.5 1790.3,1968.7 1798.7,1930.7 1805.0,1922.3 1817.7,1932.8 1828.2,1939.1 1843.0,1909.6 1853.5,1909.6 1866.1,1922.3 1880.9,1892.8 1887.2,1905.4 1895.6,1928.6 1910.4,1897.0 1920.9,1920.2 1931.5,1907.5 1948.3,1905.4 1961.0,1905.4 1967.3,1918.1 1988.4,1899.1 1994.7,1899.1 2007.4,1922.3 2013.7,1911.7 2024.2,1922.3 2036.9,1920.2 2053.7,1932.8 2064.3,1951.8 2079.0,1945.5 2093.8,1941.2 2110.7,1958.1 2125.4,1964.4 2146.5,1960.2 2159.1,1972.9 2169.7,1966.5 2178.1,1956.0 2188.7,1972.9 2201.3,1979.2 2211.8,1991.8" fill="none" stroke="#dcecf4" stroke-width="2.8" stroke-linejoin="round" stroke-linecap="round" opacity="1" />
</g>
</svg>
</body></html>
